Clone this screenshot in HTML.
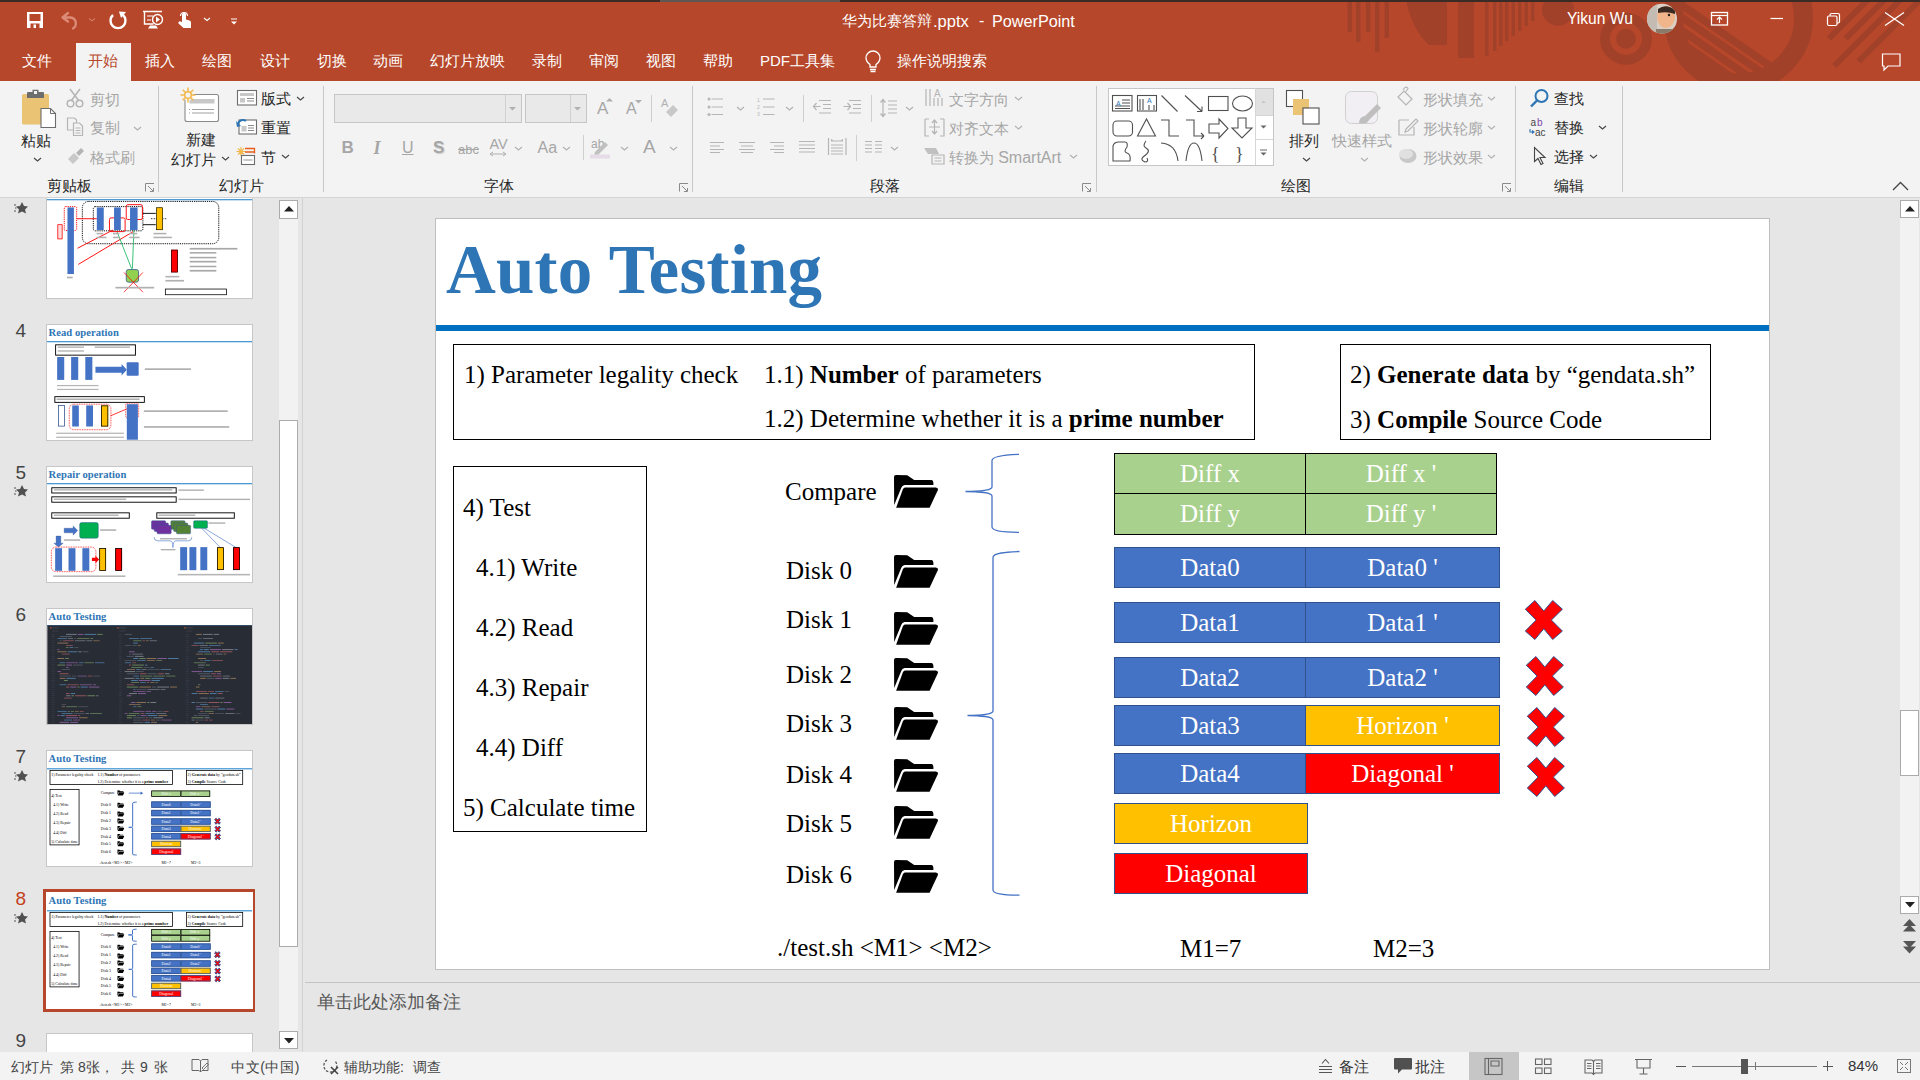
<!DOCTYPE html>
<html><head><meta charset="utf-8"><style>
*{margin:0;padding:0;box-sizing:border-box}
html,body{width:1920px;height:1080px;overflow:hidden;background:#E6E6E6;font-family:"Liberation Sans",sans-serif;position:relative}
.a{position:absolute}
.t{position:absolute;white-space:pre;line-height:1}
svg{position:absolute;overflow:visible}
.st{position:absolute;white-space:pre;line-height:1;font-family:"Liberation Serif",serif;font-size:25px;color:#000}
.cell{position:absolute;color:#fff;font-family:"Liberation Serif",serif;font-size:25px;text-align:center;line-height:1;white-space:pre}
.sl{position:absolute;left:0;top:0;width:1333px;height:750px;background:#fff;overflow:hidden}
.th{position:absolute;width:1333px;height:750px;transform-origin:0 0;transform:scale(0.15379)}
.tab{position:absolute;top:53px;font-size:15px;color:#fff;line-height:1;white-space:pre}
.r{position:absolute;font-size:15px;color:#262626;line-height:1;white-space:pre}
.d{color:#A6A6A6}
</style></head><body>
<div class="a" style="left:0px;top:0px;width:1920px;height:81px;background:#B7472A;"></div>
<svg width="620" height="81" style="left:1300px;top:0"><defs><clipPath id="tb"><rect x="0" y="2" width="620" height="79"/></clipPath></defs><g clip-path="url(#tb)" fill="#A2412A"><rect x="47.5" y="0" width="4.5" height="32"/><rect x="56" y="0" width="4.5" height="42"/><rect x="66" y="0" width="4.5" height="32"/><rect x="75" y="0" width="4.5" height="52"/><rect x="84.5" y="0" width="4.5" height="38"/><path d="M106,0 Q112,30 129,45 L129,0 Z"/><rect x="129" y="0" width="18" height="45"/><rect x="158" y="0" width="16" height="58"/><rect x="185" y="0" width="3.5" height="56"/><rect x="193" y="0" width="3.5" height="51"/><rect x="199" y="0" width="3.5" height="46"/><rect x="205" y="0" width="3.5" height="41"/><rect x="211.5" y="0" width="3.5" height="36"/><rect x="218" y="0" width="3.5" height="31"/><rect x="224.5" y="0" width="3.5" height="26"/><rect x="231" y="0" width="3.5" height="21"/><circle cx="258" cy="9.7" r="16"/><circle cx="326" cy="38.7" r="21" fill="none" stroke="#A2412A" stroke-width="10"/><circle cx="326" cy="38.7" r="10"/><circle cx="438.5" cy="18" r="65" fill="none" stroke="#A2412A" stroke-width="19"/><defs><clipPath id="inr"><circle cx="438.5" cy="18" r="56"/></clipPath></defs><g clip-path="url(#inr)"><line x1="310" y1="-6.599999999999994" x2="450" y2="90.0" stroke="#A2412A" stroke-width="7.5"/><line x1="328" y1="-6.599999999999994" x2="468" y2="90.0" stroke="#A2412A" stroke-width="7.5"/><line x1="347" y1="-6.599999999999994" x2="487" y2="90.0" stroke="#A2412A" stroke-width="7.5"/><line x1="365" y1="-6.599999999999994" x2="505" y2="90.0" stroke="#A2412A" stroke-width="7.5"/></g><line x1="528.8" y1="38.7" x2="577.5" y2="-10" stroke="#A2412A" stroke-width="6"/><line x1="545.6" y1="38.7" x2="594.3000000000001" y2="-10" stroke="#A2412A" stroke-width="6"/><line x1="534.2" y1="66" x2="610.2" y2="-10" stroke="#A2412A" stroke-width="6"/><line x1="558.5" y1="61.5" x2="630.0" y2="-10" stroke="#A2412A" stroke-width="6"/></g></svg>
<div class="a" style="left:0px;top:0px;width:1920px;height:2px;background:#3B2B27;"></div>
<div class="a" style="left:660px;top:0px;width:180px;height:2px;background:#5E5754;"></div>
<svg width="260" height="40" style="left:0;top:0"><rect x="27" y="12" width="16" height="16" fill="#fff"/><rect x="29.5" y="14" width="11" height="7" fill="#B7472A"/><rect x="30.5" y="23.5" width="9" height="4.5" fill="#B7472A"/><rect x="33.5" y="24.5" width="2.5" height="3.5" fill="#fff"/><path d="M62.5,17.5 l5.5,-4.5 M62.5,17.5 l5.5,4 M63,17.5 h8 a6,6 0 0 1 2,11" fill="none" stroke="#DB8B77" stroke-width="2.3" stroke-linecap="round"/><polyline points="89,18.5 92,20.8 95,18.5" fill="none" stroke="#D98C78" stroke-width="1"/><path d="M113,15 a7.5,7.5 0 1 0 10,0" fill="none" stroke="#fff" stroke-width="2.4"/><polygon points="119,11.5 126,12 121,18" fill="#fff"/><path d="M143,11.5 h19" stroke="#fff" stroke-width="1.5"/><path d="M144.5,12 v12 h9" fill="none" stroke="#fff" stroke-width="1.4"/><path d="M147,16 h6 M147,20 h4" stroke="#fff" stroke-width="1.2"/><circle cx="157.5" cy="19.5" r="5" fill="none" stroke="#fff" stroke-width="1.4"/><polygon points="156,16.5 160,19.5 156,22.5" fill="#fff"/><path d="M148,28.5 h10 l-2,-3 h-6 z" fill="#fff"/><path d="M182,22 v-7.5 a2,2 0 0 1 4,0 v5 l3.5,1 a2,2 0 0 1 1.5,2 v5.5 h-7.5 l-5,-4.5 a1.5,1.5 0 0 1 2,-2 z" fill="#fff"/><path d="M180.5,16 a3.5,3.5 0 1 1 7,0" fill="none" stroke="#fff" stroke-width="1.2"/><polyline points="204,18 207,20.5 210,18" fill="none" stroke="#fff" stroke-width="1.1"/><path d="M231,19 h6" stroke="#fff" stroke-width="1"/><polygon points="231,21.5 237,21.5 234,24.5" fill="#fff"/></svg>
<div class="t" style="left:842px;top:13px;font-size:15px;color:#fff;">华为比赛答辩</div>
<div class="t" style="left:933px;top:12.5px;font-size:16.5px;color:#fff;">.pptx</div>
<div class="t" style="left:979px;top:12.5px;font-size:16px;color:#fff;">-</div>
<div class="t" style="left:992px;top:12.5px;font-size:16.2px;color:#fff;">PowerPoint</div>
<div class="t" style="left:1567px;top:11px;font-size:15.6px;color:#fff;">Yikun Wu</div>
<svg width="32" height="32" style="left:1646px;top:3px"><defs><clipPath id="av"><circle cx="16" cy="15.75" r="15"/></clipPath></defs><g clip-path="url(#av)"><rect width="32" height="32" fill="#D9CFC4"/><rect x="0" y="0" width="11" height="32" fill="#C4BCB2"/><ellipse cx="20" cy="14" rx="9" ry="11" fill="#F0B58A"/><path d="M12,6 q8,-6 17,1 l0,4 q-8,-3 -17,-1 z" fill="#3a2a22"/><circle cx="23" cy="12" r="1.2" fill="#222"/><rect x="10" y="26" width="22" height="8" fill="#8a7a6a"/></g></svg>
<svg width="220" height="80" style="left:1700px;top:0"><rect x="11.5" y="12.5" width="16" height="12.5" fill="none" stroke="#fff" stroke-width="1.3"/><path d="M11.5,15.5 h16" stroke="#fff" stroke-width="1.2"/><path d="M19.5,23 v-6 M17,19.5 l2.5,-2.5 l2.5,2.5" fill="none" stroke="#fff" stroke-width="1.2"/><path d="M70.5,18.5 h12.5" stroke="#fff" stroke-width="1.2"/><rect x="127.5" y="16" width="9.5" height="9.5" rx="1.5" fill="none" stroke="#fff" stroke-width="1.2"/><path d="M130,16 v-1 a1.5,1.5 0 0 1 1.5,-1.5 h6.5 a1.5,1.5 0 0 1 1.5,1.5 v6.5 a1.5,1.5 0 0 1 -1.5,1.5 h-1" fill="none" stroke="#fff" stroke-width="1.2"/><path d="M185,12.5 l19,13 M204,12.5 l-19,13" stroke="#fff" stroke-width="1.3"/><path d="M182.5,54 h17.5 v12 h-12 l-4,4 v-4 h-1.5 z" fill="none" stroke="#fff" stroke-width="1.2"/></svg>
<div class="a" style="left:76px;top:43px;width:55px;height:38px;background:#F3F3F3;"></div>
<div class="tab" style="left:22px">文件</div>
<div class="tab" style="left:145px">插入</div>
<div class="tab" style="left:202px">绘图</div>
<div class="tab" style="left:259.5px">设计</div>
<div class="tab" style="left:316.5px">切换</div>
<div class="tab" style="left:373px">动画</div>
<div class="tab" style="left:430px">幻灯片放映</div>
<div class="tab" style="left:532px">录制</div>
<div class="tab" style="left:589px">审阅</div>
<div class="tab" style="left:646px">视图</div>
<div class="tab" style="left:703px">帮助</div>
<div class="tab" style="left:897px">操作说明搜索</div>
<div class="tab" style="left:87.5px;color:#B7472A">开始</div>
<div class="tab" style="left:760px"><span style="font-size:15px">PDF</span>工具集</div>
<svg width="20" height="22" style="left:863px;top:51px"><path d="M7,18.5 h6 M7.5,20.5 h5 M7,16 v-2.5 q-4,-3 -4,-6.5 a7,7 0 0 1 14,0 q0,3.5 -4,6.5 v2.5 z" fill="none" stroke="#fff" stroke-width="1.3"/></svg>
<div class="a" style="left:0px;top:81px;width:1920px;height:116px;background:#F3F3F3;"></div>
<div class="a" style="left:0px;top:197px;width:1920px;height:1px;background:#D4D4D4;"></div>
<div class="a" style="left:158px;top:86px;width:1px;height:106px;background:#C8C8C8;"></div>
<div class="a" style="left:323px;top:86px;width:1px;height:106px;background:#C8C8C8;"></div>
<div class="a" style="left:692px;top:86px;width:1px;height:106px;background:#C8C8C8;"></div>
<div class="a" style="left:1096px;top:86px;width:1px;height:106px;background:#C8C8C8;"></div>
<div class="a" style="left:1515px;top:86px;width:1px;height:106px;background:#C8C8C8;"></div>
<div class="a" style="left:1622px;top:86px;width:1px;height:106px;background:#C8C8C8;"></div>
<div class="a" style="left:650.5px;top:95px;width:1px;height:27px;background:#CFCFCF;"></div>
<div class="a" style="left:582.5px;top:134.5px;width:1px;height:25.5px;background:#CFCFCF;"></div>
<div class="a" style="left:803px;top:95px;width:1px;height:27px;background:#CFCFCF;"></div>
<div class="a" style="left:870.5px;top:95px;width:1px;height:27px;background:#CFCFCF;"></div>
<div class="a" style="left:855.5px;top:134.5px;width:1px;height:26.0px;background:#CFCFCF;"></div>
<div class="t" style="left:46.5px;top:177.5px;font-size:15px;color:#262626;">剪贴板</div>
<div class="t" style="left:218.5px;top:177.5px;font-size:15px;color:#262626;">幻灯片</div>
<div class="t" style="left:483.5px;top:177.5px;font-size:15px;color:#262626;">字体</div>
<div class="t" style="left:869.5px;top:177.5px;font-size:15px;color:#262626;">段落</div>
<div class="t" style="left:1280.5px;top:177.5px;font-size:15px;color:#262626;">绘图</div>
<div class="t" style="left:1554px;top:177.5px;font-size:15px;color:#262626;">编辑</div>
<svg width="10" height="9" style="left:144.5px;top:183px"><path d="M0.5,8.5 v-8 h8.5 M3,3 l5,5 M8.5,5 v3.5 h-3.5" fill="none" stroke="#8A8A8A" stroke-width="1"/></svg>
<svg width="10" height="9" style="left:678.5px;top:183px"><path d="M0.5,8.5 v-8 h8.5 M3,3 l5,5 M8.5,5 v3.5 h-3.5" fill="none" stroke="#8A8A8A" stroke-width="1"/></svg>
<svg width="10" height="9" style="left:1081.5px;top:183px"><path d="M0.5,8.5 v-8 h8.5 M3,3 l5,5 M8.5,5 v3.5 h-3.5" fill="none" stroke="#8A8A8A" stroke-width="1"/></svg>
<svg width="10" height="9" style="left:1501.5px;top:183px"><path d="M0.5,8.5 v-8 h8.5 M3,3 l5,5 M8.5,5 v3.5 h-3.5" fill="none" stroke="#8A8A8A" stroke-width="1"/></svg>
<svg width="40" height="42" style="left:20px;top:87px"><rect x="2" y="7" width="27" height="30.5" rx="1.5" fill="#EBC375"/><path d="M7,11 v-5 a1,1 0 0 1 1,-1 h4.5 v-2.3 h6 v2.3 h4.5 a1,1 0 0 1 1,1 v5 z" fill="#6D6D6D"/><rect x="14" y="4" width="3" height="3" fill="#F3F3F3"/><path d="M21,21.5 h9.5 l5,5 v14 h-14.5 z" fill="#fff" stroke="#6D6D6D" stroke-width="1.1"/><path d="M30.5,21.5 v5 h5" fill="none" stroke="#6D6D6D" stroke-width="1"/></svg>
<div class="t" style="left:20.5px;top:132.5px;font-size:15px;color:#262626;">粘贴</div>
<svg width="9" height="6" style="left:33.0px;top:156.5px"><polyline points="1,1 4.5,4 8,1" fill="none" stroke="#444" stroke-width="1.1"/></svg>
<svg width="20" height="20" style="left:66px;top:88px"><path d="M4,1 l9,12 M14,1 l-9,12" stroke="#B5B5B5" stroke-width="1.5"/><circle cx="4.5" cy="15.5" r="3.3" fill="none" stroke="#B5B5B5" stroke-width="1.5"/><circle cx="13.5" cy="15.5" r="3.3" fill="none" stroke="#B5B5B5" stroke-width="1.5"/></svg>
<div class="t" style="left:90px;top:91.5px;font-size:15px;color:#A6A6A6;">剪切</div>
<svg width="20" height="20" style="left:66px;top:117px"><path d="M1.5,1 h7 l2,2 v10 h-9 z" fill="none" stroke="#B5B5B5" stroke-width="1.2"/><path d="M7.5,6 h6 l3,3 v9.5 h-9 z" fill="#F3F3F3" stroke="#B5B5B5" stroke-width="1.2"/><path d="M9.5,11 h5 M9.5,13.5 h5 M9.5,16 h5" stroke="#B5B5B5" stroke-width="1"/></svg>
<div class="t" style="left:90px;top:120px;font-size:15px;color:#A6A6A6;">复制</div>
<svg width="9" height="6" style="left:133.0px;top:125.5px"><polyline points="1,1 4.5,4 8,1" fill="none" stroke="#B0B0B0" stroke-width="1.1"/></svg>
<svg width="20" height="18" style="left:66px;top:147px"><path d="M2,12 l6,-6 l5,5 l-6,6 z" fill="#C8C8C8"/><path d="M10,6 l5,-5 l3,3 l-5,5 z" fill="#B5B5B5"/></svg>
<div class="t" style="left:90px;top:149.5px;font-size:15px;color:#A6A6A6;">格式刷</div>
<svg width="44" height="40" style="left:179px;top:86px"><rect x="6" y="8.5" width="33.5" height="27" rx="2" fill="#fff" stroke="#8A8A8A" stroke-width="1.1"/><rect x="10.5" y="13" width="25" height="4.5" fill="#C8C8C8"/><path d="M13,23.5 h22 M13,27 h22 M10,23.5 h1 M10,27 h1" stroke="#A0A0A0" stroke-width="1"/><circle cx="9" cy="9" r="5.5" fill="#F3F3F3"/><g stroke="#F2B84B" stroke-width="1.5"><path d="M9,1.5 v15 M1.5,9 h15 M3.7,3.7 l10.6,10.6 M14.3,3.7 l-10.6,10.6"/></g><circle cx="9" cy="9" r="3.3" fill="#F3F3F3" stroke="#F2B84B" stroke-width="1.5"/></svg>
<div class="t" style="left:185.5px;top:131.5px;font-size:15px;color:#262626;">新建</div>
<div class="t" style="left:171px;top:151.5px;font-size:15px;color:#262626;">幻灯片</div>
<svg width="9" height="6" style="left:221.0px;top:155.5px"><polyline points="1,1 4.5,4 8,1" fill="none" stroke="#444" stroke-width="1.1"/></svg>
<svg width="22" height="18" style="left:236px;top:89px"><rect x="1.5" y="1.5" width="19" height="14.5" fill="#fff" stroke="#6D6D6D" stroke-width="1.1"/><rect x="4" y="4" width="14" height="3" fill="#C8C8C8"/><rect x="4" y="9" width="5" height="4.5" fill="#C8C8C8"/><path d="M11,9.5 h7 M11,12 h7" stroke="#8A8A8A" stroke-width="1"/></svg>
<div class="t" style="left:261px;top:91px;font-size:15px;color:#262626;">版式</div>
<svg width="9" height="6" style="left:296.0px;top:96px"><polyline points="1,1 4.5,4 8,1" fill="none" stroke="#444" stroke-width="1.1"/></svg>
<svg width="22" height="18" style="left:236px;top:117px"><rect x="3" y="3" width="17.5" height="14" fill="#fff" stroke="#6D6D6D" stroke-width="1.1"/><rect x="5.5" y="9" width="5" height="5.5" fill="#C8C8C8"/><path d="M12,8.5 h6 M12,11 h6 M12,13.5 h6" stroke="#8A8A8A" stroke-width="1"/><path d="M2,7 a5,5 0 0 1 8,-3" fill="none" stroke="#2E75B6" stroke-width="2"/><polygon points="0,4 5,9 1,10" fill="#2E75B6"/></svg>
<div class="t" style="left:261px;top:119.5px;font-size:15px;color:#262626;">重置</div>
<svg width="22" height="20" style="left:236px;top:146px"><g stroke="#F2B84B" stroke-width="1.2"><path d="M5,1 v9 M0.5,5.5 h9 M2,2.5 l6,6 M8,2.5 l-6,6"/></g><rect x="5.5" y="9.5" width="13" height="9" fill="#fff" stroke="#6D6D6D" stroke-width="1.1"/><path d="M9,2.5 h9.5 v5 M9,6 h9.5" fill="none" stroke="#E65E1A" stroke-width="1.3"/><rect x="7.5" y="13" width="9" height="2" fill="#C8C8C8"/></svg>
<div class="t" style="left:261px;top:149.5px;font-size:15px;color:#262626;">节</div>
<svg width="9" height="6" style="left:280.5px;top:154px"><polyline points="1,1 4.5,4 8,1" fill="none" stroke="#444" stroke-width="1.1"/></svg>
<div class="a" style="left:334px;top:94px;width:188px;height:28.5px;background:#E9E9E9;border:1px solid #C6C6C6"></div>
<div class="a" style="left:505px;top:95px;width:1px;height:26.5px;background:#D0D0D0;"></div>
<svg width="8" height="5" style="left:509px;top:107px"><polygon points="0,0 7,0 3.5,3.5" fill="#B0B0B0"/></svg>
<div class="a" style="left:524.5px;top:94px;width:62px;height:28.5px;background:#E9E9E9;border:1px solid #C6C6C6"></div>
<div class="a" style="left:569.5px;top:95px;width:1px;height:26.5px;background:#D0D0D0;"></div>
<svg width="8" height="5" style="left:574px;top:107px"><polygon points="0,0 7,0 3.5,3.5" fill="#B0B0B0"/></svg>
<div class="t" style="left:597px;top:100px;font-size:17px;color:#A6A6A6;">A</div>
<svg width="8" height="4" style="left:606px;top:98px"><polygon points="0,3.5 7,3.5 3.5,0" fill="#B0B0B0"/></svg>
<div class="t" style="left:626px;top:101px;font-size:16px;color:#A6A6A6;">A</div>
<svg width="8" height="4" style="left:635px;top:100px"><polygon points="0,0 7,0 3.5,3.5" fill="#B0B0B0"/></svg>
<svg width="22" height="22" style="left:660px;top:97px"><text x="1" y="10" font-size="11" fill="#B0B0B0" font-family="Liberation Sans">A</text><path d="M6,15 l7,-7 l5,5 l-7,7 z" fill="#C8C8C8"/></svg>
<div class="t" style="left:341.5px;top:139px;font-size:17px;color:#A6A6A6;"><b>B</b></div>
<div class="t" style="left:373.5px;top:139px;font-size:18px;color:#A6A6A6;"><i><b style="font-family:Liberation Serif">I</b></i></div>
<div class="t" style="left:402px;top:139.5px;font-size:16px;color:#A6A6A6;"><u>U</u></div>
<div class="t" style="left:433px;top:138.5px;font-size:17px;color:#A6A6A6;text-shadow:1px 1px 1px #ccc"><b>S</b></div>
<div class="t" style="left:458px;top:142.5px;font-size:13px;color:#A6A6A6;"><s>abc</s></div>
<div class="t" style="left:489.5px;top:137px;font-size:14.5px;color:#A6A6A6;">AV</div>
<svg width="20" height="6" style="left:489px;top:151px"><path d="M1,3 h16 M1,3 l3,-2 M1,3 l3,2 M17,3 l-3,-2 M17,3 l-3,2" fill="none" stroke="#B0B0B0" stroke-width="1"/></svg>
<svg width="9" height="6" style="left:513.5px;top:145.5px"><polyline points="1,1 4.5,4 8,1" fill="none" stroke="#B0B0B0" stroke-width="1.1"/></svg>
<div class="t" style="left:537.5px;top:140px;font-size:16px;color:#A6A6A6;">Aa</div>
<svg width="9" height="6" style="left:562.0px;top:145.5px"><polyline points="1,1 4.5,4 8,1" fill="none" stroke="#B0B0B0" stroke-width="1.1"/></svg>
<div class="t" style="left:591px;top:137.5px;font-size:12px;color:#A6A6A6;">ab</div>
<svg width="22" height="22" style="left:590px;top:137px"><path d="M5,15 l10,-10 l3,3 l-10,10 l-4,1 z" fill="#C0C0C0"/><rect x="0" y="17.5" width="20" height="4" fill="#E5DCE8"/></svg>
<svg width="9" height="6" style="left:619.5px;top:145.5px"><polyline points="1,1 4.5,4 8,1" fill="none" stroke="#B0B0B0" stroke-width="1.1"/></svg>
<div class="t" style="left:643px;top:136.5px;font-size:19px;color:#A6A6A6;">A</div>
<svg width="9" height="6" style="left:669.0px;top:145.5px"><polyline points="1,1 4.5,4 8,1" fill="none" stroke="#B0B0B0" stroke-width="1.1"/></svg>
<svg width="400" height="80" style="left:700px;top:90px"><g stroke="#B5B5B5" stroke-width="1.2" fill="none"><path d="M11.5,9 h11.5 M11.5,17 h11.5 M11.5,24.5 h11.5"/><path d="M63,9 h11.5 M63,17 h11.5 M63,24.5 h11.5"/><path d="M119,10.5 h12 M123,14.5 h8 M123,18.5 h8 M119,23 h12 M113.5,16.5 h7 M116.5,13 l-3,3.5 l3,3.5"/><path d="M149,10.5 h12 M153,14.5 h8 M153,18.5 h8 M149,23 h12 M143.5,16.5 h7 M147.5,13 l3,3.5 l-3,3.5"/><path d="M188,11 h9 M188,15 h9 M188,19 h9 M188,23 h9 M183,10 v16 M180.5,12.5 l2.5,-3 l2.5,3 M180.5,23.5 l2.5,3 l2.5,-3"/><path d="M10,52.5 h14 M10,56 h10 M10,59.5 h14 M10,62.5 h10"/><path d="M39,52.5 h16 M41,56 h12 M39,59.5 h16 M41,62.5 h12"/><path d="M70,52.5 h14 M74,56 h10 M70,59.5 h14 M74,62.5 h10"/><path d="M99,51.5 h16 M99,55 h16 M99,58.5 h16 M99,62 h16"/><path d="M128.5,48 v17 M146,48 v17 M131,55 h12 M131,58 h12 M131,61 h12 M131,64 h12 M131,51 h12 M133,51 l-2,-1.5 M141,51 l2,-1.5"/><path d="M165,51.5 h7 M175,51.5 h7 M165,55 h7 M175,55 h7 M165,58.5 h7 M175,58.5 h7 M165,62 h7 M175,62 h7"/></g><g fill="#B5B5B5"><circle cx="9" cy="9" r="1.5"/><circle cx="9" cy="17" r="1.5"/><circle cx="9" cy="24.5" r="1.5"/></g><text x="57" y="12" font-size="5" fill="#B5B5B5">1</text><text x="57" y="19" font-size="5" fill="#B5B5B5">2</text><text x="57" y="26" font-size="5" fill="#B5B5B5">3</text></svg>
<svg width="9" height="6" style="left:735.5px;top:106px"><polyline points="1,1 4.5,4 8,1" fill="none" stroke="#B0B0B0" stroke-width="1.1"/></svg>
<svg width="9" height="6" style="left:784.5px;top:106px"><polyline points="1,1 4.5,4 8,1" fill="none" stroke="#B0B0B0" stroke-width="1.1"/></svg>
<svg width="9" height="6" style="left:904.5px;top:106px"><polyline points="1,1 4.5,4 8,1" fill="none" stroke="#B0B0B0" stroke-width="1.1"/></svg>
<svg width="9" height="6" style="left:889.5px;top:145.5px"><polyline points="1,1 4.5,4 8,1" fill="none" stroke="#B0B0B0" stroke-width="1.1"/></svg>
<svg width="24" height="80" style="left:923px;top:86px"><g stroke="#B5B5B5" stroke-width="1.2" fill="none"><path d="M3,3 v17 M7,3 v17 M11,12 v8 M15,12 v8 M19,12 v8"/><path d="M2,33 v17 h4 M2,33 h4 M21,33 v17 h-4 M21,33 h-4 M11.5,34 v14 M9,37 l2.5,-3 l2.5,3 M9,45 l2.5,3 l2.5,-3 M6,41 h11"/><path d="M9,69 h12 v9 h-12 z M11.5,72 h7 M11.5,75 h7"/></g><text x="11" y="11" font-size="10" fill="#B5B5B5" font-family="Liberation Sans">A</text><polygon points="1,62 13,62 16,68 5,68" fill="#C0C0C0"/></svg>
<div class="t" style="left:949px;top:91.5px;font-size:15px;color:#A6A6A6;">文字方向</div>
<svg width="9" height="6" style="left:1013.5px;top:96px"><polyline points="1,1 4.5,4 8,1" fill="none" stroke="#B0B0B0" stroke-width="1.1"/></svg>
<div class="t" style="left:949px;top:120.5px;font-size:15px;color:#A6A6A6;">对齐文本</div>
<svg width="9" height="6" style="left:1013.5px;top:125px"><polyline points="1,1 4.5,4 8,1" fill="none" stroke="#B0B0B0" stroke-width="1.1"/></svg>
<div class="t" style="left:949px;top:149.5px;font-size:15px;color:#A6A6A6;">转换为 <span style="font-size:16px">SmartArt</span></div>
<svg width="9" height="6" style="left:1068.5px;top:154px"><polyline points="1,1 4.5,4 8,1" fill="none" stroke="#B0B0B0" stroke-width="1.1"/></svg>
<div class="a" style="left:1108px;top:88px;width:166px;height:77.5px;background:#fff;border:1px solid #C6C6C6"></div>
<div class="a" style="left:1255px;top:89px;width:18px;height:26px;background:#E1E1E1;"></div>
<div class="a" style="left:1255px;top:88px;width:1px;height:77px;background:#D6D6D6;"></div>
<div class="a" style="left:1255px;top:115px;width:18px;height:1px;background:#D6D6D6;"></div>
<div class="a" style="left:1255px;top:138.5px;width:18px;height:1px;background:#D6D6D6;"></div>
<svg width="10" height="30" style="left:1259px;top:98px"><polygon points="2,5 7,5 4.5,2.5" fill="#C8C8C8"/><polygon points="1.5,27.5 7.5,27.5 4.5,30.5" fill="#666"/></svg>
<svg width="10" height="8" style="left:1259px;top:149px"><path d="M1,1 h7" stroke="#666" stroke-width="1"/><polygon points="1.5,3.5 7.5,3.5 4.5,6.5" fill="#666"/></svg>
<svg width="150" height="80" style="left:1108px;top:88px"><g stroke="#505050" stroke-width="1.1" fill="none"><rect x="4.5" y="7.5" width="19.5" height="15.5"/><path d="M14,12 h8 M14,15 h8 M7,18 h15 M7,20.5 h15"/><rect x="29.5" y="7.5" width="19" height="15.5"/><path d="M32,11 v11 M35,11 v11 M46,17 v5 M41,17 v5"/><path d="M53.5,7.5 l16,16"/><path d="M77,7.5 l17,16 M94,23.5 v-5 M94,23.5 h-5"/><rect x="100.5" y="8.5" width="19.5" height="14"/><ellipse cx="134.5" cy="15.5" rx="10" ry="7.5"/><rect x="5" y="33" width="19.5" height="15" rx="4"/><path d="M29.5,48 l9,-17 l9,17 z"/><path d="M53,32 h8 v16 h10"/><path d="M78,32 h8 v16 h10 M96,48 l-3,-3 M96,48 l-3,3"/><path d="M101,36 h10 v-5 l9,9.5 l-9,9.5 v-5 h-10 z"/><path d="M130,30 h8 v10 h6 l-10,10 l-10,-10 h6 z"/><path d="M5,73 v-15 q1,-4 6,-4 h6 q3,0 2,5 q-4,5 0,6 q4,1 3,8 z"/><path d="M38,53 q-4,5 0,7 q6,3 -3,9 q-3,3 2,5 q4,0 2,-4"/><path d="M53,55 q15,1 17,18"/><path d="M78,73 q2,-18 8,-18 q6,0 8,18"/><text x="103" y="72" font-size="18" fill="#505050" stroke="none" font-family="Liberation Serif">{</text><text x="127" y="72" font-size="18" fill="#505050" stroke="none" font-family="Liberation Serif">}</text></g><text x="8" y="18" font-size="7" fill="#2E75B6" font-family="Liberation Sans">A</text><text x="39" y="15" font-size="7" fill="#2E75B6" font-family="Liberation Sans">A</text></svg>
<svg width="40" height="40" style="left:1284px;top:89px"><rect x="2.5" y="1.5" width="16" height="16" fill="#fff" stroke="#505050" stroke-width="1.1"/><rect x="9" y="10" width="16" height="16" fill="#EBC375"/><rect x="19" y="19" width="16" height="16" fill="#fff" stroke="#505050" stroke-width="1.1"/></svg>
<div class="t" style="left:1288.5px;top:132.5px;font-size:15px;color:#262626;">排列</div>
<svg width="9" height="6" style="left:1301.5px;top:156.5px"><polyline points="1,1 4.5,4 8,1" fill="none" stroke="#444" stroke-width="1.1"/></svg>
<svg width="44" height="40" style="left:1342px;top:89px"><rect x="3.5" y="2.5" width="32" height="32" rx="6" fill="#F2EFF4" stroke="#D0D0D0" stroke-width="1"/><path d="M17,34 q0,-6 6,-7 l12,-12 l4,4 l-12,12 q-2,5 -10,3 z" fill="#BFBFBF"/></svg>
<div class="t" style="left:1332px;top:132.5px;font-size:15px;color:#A6A6A6;">快速样式</div>
<svg width="9" height="6" style="left:1359.5px;top:156.5px"><polyline points="1,1 4.5,4 8,1" fill="none" stroke="#B0B0B0" stroke-width="1.1"/></svg>
<svg width="24" height="80" style="left:1397px;top:86px"><g stroke="#B5B5B5" stroke-width="1.2" fill="none"><path d="M7,5 l8,8 l-6,6 l-8,-8 z M6,4 l2,-2.5 a2,2 0 0 1 3,1 l-2,3"/><path d="M2,34 h10 M2,34 v15 h15 v-8 M9,43 l10,-10 l2,2 l-10,10 l-3,1 z"/></g><ellipse cx="11" cy="70" rx="8.5" ry="7" fill="#C8C8C8"/><ellipse cx="9" cy="68" rx="7" ry="5" fill="#E0E0E0"/></svg>
<div class="t" style="left:1423px;top:91.5px;font-size:15px;color:#A6A6A6;">形状填充</div>
<svg width="9" height="6" style="left:1487.0px;top:96px"><polyline points="1,1 4.5,4 8,1" fill="none" stroke="#B0B0B0" stroke-width="1.1"/></svg>
<div class="t" style="left:1423px;top:120.5px;font-size:15px;color:#A6A6A6;">形状轮廓</div>
<svg width="9" height="6" style="left:1487.0px;top:125px"><polyline points="1,1 4.5,4 8,1" fill="none" stroke="#B0B0B0" stroke-width="1.1"/></svg>
<div class="t" style="left:1423px;top:149.5px;font-size:15px;color:#A6A6A6;">形状效果</div>
<svg width="9" height="6" style="left:1487.0px;top:154px"><polyline points="1,1 4.5,4 8,1" fill="none" stroke="#B0B0B0" stroke-width="1.1"/></svg>
<svg width="22" height="20" style="left:1529px;top:88px"><circle cx="12.5" cy="8" r="6" fill="none" stroke="#2E75B6" stroke-width="2"/><path d="M8,12.5 l-6,6" stroke="#2E75B6" stroke-width="2.4"/></svg>
<div class="t" style="left:1553.5px;top:91px;font-size:15px;color:#262626;">查找</div>
<svg width="22" height="20" style="left:1529px;top:118px"><text x="1.5" y="8" font-size="10" fill="#444" font-family="Liberation Sans">a</text><text x="8" y="8" font-size="10" fill="#7B46A5" font-family="Liberation Sans">b</text><text x="6" y="18" font-size="10" fill="#444" font-family="Liberation Sans">ac</text><path d="M1,11 v3 h4 M3,12.5 l2,1.5 l-2,1.5" fill="none" stroke="#2E75B6" stroke-width="1.1"/></svg>
<div class="t" style="left:1553.5px;top:120px;font-size:15px;color:#262626;">替换</div>
<svg width="9" height="6" style="left:1597.5px;top:125px"><polyline points="1,1 4.5,4 8,1" fill="none" stroke="#444" stroke-width="1.1"/></svg>
<svg width="14" height="20" style="left:1533px;top:146px"><path d="M1.5,1.5 v14 l3.5,-3 l3,6 l2,-1 l-3,-6 h5 z" fill="none" stroke="#444" stroke-width="1.1"/></svg>
<div class="t" style="left:1553.5px;top:149px;font-size:15px;color:#262626;">选择</div>
<svg width="9" height="6" style="left:1588.5px;top:154px"><polyline points="1,1 4.5,4 8,1" fill="none" stroke="#444" stroke-width="1.1"/></svg>
<svg width="18" height="10" style="left:1892px;top:181px"><polyline points="1,9 8.5,1.5 16,9" fill="none" stroke="#444" stroke-width="1.3"/></svg>
<div class="a" style="left:0px;top:198px;width:302px;height:854px;background:#E6E6E6;"></div>
<div class="a" style="left:0;top:198px;width:278px;height:854px;overflow:hidden"><div class="a" style="left:0;top:-198px;width:278px;height:1080px"><div class="a" style="left:46px;top:181.7px;width:207px;height:117.3px;background:#C6C6C6"></div><div class="a" style="left:47px;top:182.7px;width:205px;height:115.3px;overflow:hidden;background:#fff"><div class="th"><div class="st" style="left:10px;top:17px;font-size:69px;font-weight:bold;color:#2E75B6;letter-spacing:0.2px">Write operation</div><div class="a" style="left:0.0px;top:106.0px;width:1333.0px;height:6.0px;background:#0070C0;"></div>
<svg width="1333" height="750" style="left:0;top:0"><rect x="229.8" y="119.9" width="887.1" height="275.0" rx="40" fill="none" stroke="#000" stroke-width="6" stroke-dasharray="8,6"/><rect x="301.2" y="153.5" width="322.3" height="157.5" rx="12" fill="none" stroke="#000" stroke-width="6" stroke-dasharray="8,6"/><rect x="112.2" y="153.5" width="80.8" height="155.4" rx="8" fill="none" stroke="#f00" stroke-width="6" stroke-dasharray="8,6"/><line x1="193.0" y1="232.2" x2="324.3" y2="232.2" stroke="#f00" stroke-width="6"/><line x1="623.4" y1="197.6" x2="707.4" y2="197.6" stroke="#000" stroke-width="6"/><line x1="623.4" y1="271.0" x2="707.4" y2="271.0" stroke="#000" stroke-width="6"/><line x1="675.9" y1="232.2" x2="775.7" y2="232.2" stroke="#000" stroke-width="5" stroke-dasharray="10,8"/><line x1="198.3" y1="424.3" x2="429.2" y2="305.7" stroke="#f00" stroke-width="6"/><line x1="203.5" y1="529.3" x2="560.5" y2="316.2" stroke="#f00" stroke-width="6"/><line x1="455.5" y1="316.2" x2="550.0" y2="557.6" stroke="#00B050" stroke-width="5"/><line x1="567.8" y1="237.4" x2="555.2" y2="557.6" stroke="#00B050" stroke-width="5"/><rect x="70.2" y="271.0" width="28.3" height="92.4" rx="0" fill="#fdd" stroke="#f00" stroke-width="5"/><rect x="515.3" y="562.9" width="79.8" height="81.9" rx="14" fill="#92D050" stroke="#2F528F" stroke-width="5"/><line x1="500.6" y1="581.8" x2="623.4" y2="709.9" stroke="#f00" stroke-width="5"/><line x1="623.4" y1="581.8" x2="500.6" y2="709.9" stroke="#f00" stroke-width="5"/><rect x="406.1" y="226.9" width="101.8" height="89.2" rx="10" fill="none" stroke="#f00" stroke-width="6"/><rect x="515.3" y="140.9" width="105.0" height="96.6" rx="10" fill="none" stroke="#f00" stroke-width="6"/></svg>
<div class="a" style="left:133.2px;top:158.7px;width:42.0px;height:433.6px;background:#4472C4;"></div>
<div class="a" style="left:324.3px;top:158.7px;width:45.1px;height:147.0px;background:#4472C4;"></div>
<div class="a" style="left:435.5px;top:158.7px;width:44.1px;height:147.0px;background:#4472C4;"></div>
<div class="a" style="left:539.5px;top:158.7px;width:49.3px;height:147.0px;background:#4472C4;"></div>
<div class="a" style="left:710.6px;top:158.7px;width:42.0px;height:147.0px;background:#FFC000;border:4px solid #000;"></div>
<div class="a" style="left:807.2px;top:433.8px;width:44.1px;height:147.0px;background:#FF0000;border:4px solid #000;"></div>
<div class="a" style="left:767.3px;top:686.8px;width:402.1px;height:42.0px;background:#fff;border:5px solid #000;"></div>
<div class="a" style="left:927.9px;top:422.2px;width:309.7px;height:10.5px;background:#a8a8a8;"></div>
<div class="a" style="left:927.9px;top:448.5px;width:173.2px;height:10.5px;background:#a8a8a8;"></div>
<div class="a" style="left:927.9px;top:479.9px;width:173.2px;height:10.5px;background:#a8a8a8;"></div>
<div class="a" style="left:927.9px;top:506.2px;width:173.2px;height:10.5px;background:#a8a8a8;"></div>
<div class="a" style="left:927.9px;top:537.7px;width:173.2px;height:10.5px;background:#a8a8a8;"></div>
<div class="a" style="left:927.9px;top:565.0px;width:173.2px;height:10.5px;background:#a8a8a8;"></div>
<div class="a" style="left:322.2px;top:323.5px;width:44.1px;height:10.5px;background:#b0b0b0;"></div>
<div class="a" style="left:322.2px;top:348.7px;width:65.1px;height:10.5px;background:#b0b0b0;"></div>
<div class="a" style="left:429.2px;top:323.5px;width:42.0px;height:10.5px;background:#b0b0b0;"></div>
<div class="a" style="left:429.2px;top:348.7px;width:42.0px;height:10.5px;background:#b0b0b0;"></div>
<div class="a" style="left:534.2px;top:323.5px;width:52.5px;height:10.5px;background:#b0b0b0;"></div>
<div class="a" style="left:534.2px;top:348.7px;width:68.2px;height:10.5px;background:#b0b0b0;"></div>
<div class="a" style="left:691.7px;top:323.5px;width:84.0px;height:10.5px;background:#b0b0b0;"></div>
<div class="a" style="left:691.7px;top:348.7px;width:120.7px;height:10.5px;background:#b0b0b0;"></div>
<div class="a" style="left:130.0px;top:609.1px;width:36.7px;height:10.5px;background:#b0b0b0;"></div>
<div class="a" style="left:770.4px;top:603.8px;width:89.2px;height:10.5px;background:#b0b0b0;"></div>
<div class="a" style="left:770.4px;top:630.1px;width:120.7px;height:10.5px;background:#b0b0b0;"></div>
<div class="a" style="left:445.0px;top:675.2px;width:251.9px;height:10.5px;background:#b0b0b0;"></div></div></div>
<div class="a" style="left:46px;top:324px;width:207px;height:117.3px;background:#C6C6C6"></div><div class="a" style="left:47px;top:325px;width:205px;height:115.3px;overflow:hidden;background:#fff"><div class="th"><div class="st" style="left:10px;top:17px;font-size:69px;font-weight:bold;color:#2E75B6;letter-spacing:0.2px">Read operation</div><div class="a" style="left:0.0px;top:106.0px;width:1333.0px;height:6.0px;background:#0070C0;"></div>
<div class="a" style="left:53.0px;top:125.5px;width:525.0px;height:73.5px;background:#fff;border:6px solid #000;"></div>
<div class="a" style="left:70.0px;top:140.0px;width:170.0px;height:8.0px;background:#a8a8a8;"></div><div class="a" style="left:70.0px;top:165.0px;width:170.0px;height:8.0px;background:#a8a8a8;"></div>
<div class="a" style="left:310.0px;top:140.0px;width:230.0px;height:8.0px;background:#a8a8a8;"></div>
<div class="a" style="left:66.0px;top:208.0px;width:46.0px;height:149.0px;background:#4472C4;"></div>
<div class="a" style="left:157.0px;top:208.0px;width:46.0px;height:149.0px;background:#4472C4;"></div>
<div class="a" style="left:248.6px;top:208.0px;width:46.0px;height:149.0px;background:#4472C4;"></div>
<svg width="1333" height="750" style="left:0;top:0"><polygon points="315,272 485,272 485,253 519,291 485,329 485,310 315,310" fill="#4472C4"/><line x1="415" y1="590" x2="520" y2="545" stroke="#f00" stroke-width="5"/><rect x="144.7" y="515" width="271" height="166" rx="30" fill="none" stroke="#f00" stroke-width="5" stroke-dasharray="6,5"/><rect x="512" y="508" width="84" height="95" rx="10" fill="none" stroke="#f00" stroke-width="5" stroke-dasharray="6,5"/></svg>
<div class="a" style="left:518.0px;top:242.0px;width:78.0px;height:88.0px;background:#4472C4;border-radius:6px"></div>
<div class="a" style="left:636.0px;top:282.0px;width:300.0px;height:10.0px;background:#a8a8a8;"></div>
<div class="a" style="left:65.0px;top:390.0px;width:270.0px;height:8.0px;background:#b5b5b5;"></div><div class="a" style="left:65.0px;top:415.0px;width:270.0px;height:8.0px;background:#b5b5b5;"></div>
<div class="a" style="left:47.7px;top:462.7px;width:588.0px;height:43.0px;background:#fff;border:6px solid #000;"></div>
<div class="a" style="left:62.0px;top:478.0px;width:540.0px;height:9.0px;background:#a8a8a8;"></div>
<div class="a" style="left:71.7px;top:520.6px;width:45.0px;height:139.0px;background:#fff;border:5px solid #2F528F;"></div>
<div class="a" style="left:164.0px;top:523.0px;width:43.0px;height:137.0px;background:#4472C4;"></div>
<div class="a" style="left:254.6px;top:523.0px;width:44.0px;height:137.0px;background:#4472C4;"></div>
<div class="a" style="left:352.0px;top:523.0px;width:45.6px;height:137.0px;background:#FFC000;border:5px solid #000;"></div>
<div class="a" style="left:519.0px;top:515.0px;width:72.0px;height:231.0px;background:#4472C4;"></div>
<div class="a" style="left:630.0px;top:555.0px;width:545.0px;height:10.0px;background:#a8a8a8;"></div>
<div class="a" style="left:630.0px;top:658.0px;width:555.0px;height:10.0px;background:#a8a8a8;"></div>
<div class="a" style="left:60.0px;top:700.0px;width:440.0px;height:8.0px;background:#b5b5b5;"></div><div class="a" style="left:60.0px;top:726.0px;width:440.0px;height:8.0px;background:#b5b5b5;"></div></div></div>
<div class="a" style="left:46px;top:466px;width:207px;height:117.3px;background:#C6C6C6"></div><div class="a" style="left:47px;top:467px;width:205px;height:115.3px;overflow:hidden;background:#fff"><div class="th"><div class="st" style="left:10px;top:17px;font-size:69px;font-weight:bold;color:#2E75B6;letter-spacing:0.2px">Repair operation</div><div class="a" style="left:0.0px;top:106.0px;width:1333.0px;height:6.0px;background:#0070C0;"></div>
<div class="a" style="left:28.0px;top:131.5px;width:815.0px;height:40.5px;background:#fff;border:6px solid #000;"></div>
<div class="a" style="left:45.0px;top:144.0px;width:770.0px;height:9.0px;background:#b0b0b0;"></div>
<div class="a" style="left:855.0px;top:146.0px;width:165.0px;height:9.0px;background:#b0b0b0;"></div>
<div class="a" style="left:28.0px;top:191.0px;width:815.0px;height:41.0px;background:#fff;border:6px solid #000;"></div>
<div class="a" style="left:45.0px;top:205.0px;width:470.0px;height:9.0px;background:#b0b0b0;"></div>
<div class="a" style="left:855.0px;top:206.0px;width:465.0px;height:9.0px;background:#b0b0b0;"></div>
<div class="a" style="left:28.0px;top:295.0px;width:510.0px;height:41.0px;background:#fff;border:6px solid #000;"></div>
<div class="a" style="left:45.0px;top:309.0px;width:420.0px;height:9.0px;background:#b0b0b0;"></div>
<div class="a" style="left:711.4px;top:295.0px;width:510.0px;height:41.0px;background:#fff;border:6px solid #000;"></div>
<div class="a" style="left:725.0px;top:309.0px;width:240.0px;height:9.0px;background:#b0b0b0;"></div>
<svg width="1333" height="750" style="left:0;top:0"><polygon points="111.6,398 170,398 170,383 199.7,413 170,443 170,428 111.6,428" fill="#4472C4" stroke="#2F528F" stroke-width="2"/><polygon points="59,449 90,449 90,495 105.6,495 74.8,520.6 44,495 59,495" fill="#4472C4" stroke="#2F528F" stroke-width="2"/><rect x="28" y="520.6" width="290" height="160" rx="30" fill="none" stroke="#f00" stroke-width="5" stroke-dasharray="6,5"/><polygon points="292,590 315,590 315,577 339,601 315,626 315,612 292,612" fill="#f00"/><path d="M696,456 Q696,480 720,480 L800,480 Q819,480 819,524 Q819,480 838,480 L918,480 Q942,480 942,456" fill="none" stroke="#4472C4" stroke-width="4"/><line x1="1000" y1="392" x2="1128" y2="525" stroke="#4472C4" stroke-width="4"/><line x1="1012" y1="392" x2="1232" y2="525" stroke="#4472C4" stroke-width="4"/></svg>
<div class="a" style="left:211.0px;top:360.0px;width:124.0px;height:104.0px;background:#00B050;border:3px solid #2F528F;border-radius:14px"></div>
<div class="a" style="left:345.0px;top:405.0px;width:105.0px;height:10.0px;background:#b0b0b0;"></div>
<div class="a" style="left:110.0px;top:470.0px;width:105.0px;height:10.0px;background:#b0b0b0;"></div>
<div class="a" style="left:53.0px;top:528.0px;width:45.0px;height:147.0px;background:#4472C4;"></div>
<div class="a" style="left:139.5px;top:528.0px;width:45.0px;height:147.0px;background:#4472C4;"></div>
<div class="a" style="left:229.8px;top:528.0px;width:45.0px;height:147.0px;background:#4472C4;"></div>
<div class="a" style="left:340.0px;top:528.0px;width:44.0px;height:147.0px;background:#FFC000;border:5px solid #000;"></div>
<div class="a" style="left:444.0px;top:528.0px;width:44.0px;height:147.0px;background:#FF0000;border:5px solid #000;"></div>
<div class="a" style="left:40.0px;top:705.0px;width:470.0px;height:10.0px;background:#b5b5b5;"></div>
<div class="a" style="left:677.5px;top:347.5px;width:95.0px;height:58.0px;background:#7030A0;border:3px solid #2F528F;border-radius:8px"></div>
<div class="a" style="left:804.0px;top:347.5px;width:95.0px;height:58.0px;background:#548235;border:3px solid #2F528F;border-radius:8px"></div>
<div class="a" style="left:695.5px;top:362.5px;width:95.0px;height:58.0px;background:#7030A0;border:3px solid #2F528F;border-radius:8px"></div>
<div class="a" style="left:822.0px;top:362.5px;width:95.0px;height:58.0px;background:#548235;border:3px solid #2F528F;border-radius:8px"></div>
<div class="a" style="left:713.5px;top:377.5px;width:95.0px;height:58.0px;background:#7030A0;border:3px solid #2F528F;border-radius:8px"></div>
<div class="a" style="left:840.0px;top:377.5px;width:95.0px;height:58.0px;background:#548235;border:3px solid #2F528F;border-radius:8px"></div>
<div class="a" style="left:952.0px;top:347.5px;width:93.0px;height:52.0px;background:#00B050;border:3px solid #2F528F;border-radius:8px"></div>
<div class="a" style="left:1050.0px;top:360.0px;width:110.0px;height:9.0px;background:#b0b0b0;"></div>
<div class="a" style="left:735.0px;top:462.0px;width:175.0px;height:9.0px;background:#b0b0b0;"></div>
<div class="a" style="left:740.0px;top:533.0px;width:95.0px;height:9.0px;background:#b0b0b0;"></div>
<div class="a" style="left:865.6px;top:520.6px;width:45.0px;height:150.0px;background:#4472C4;"></div>
<div class="a" style="left:925.8px;top:520.6px;width:45.0px;height:150.0px;background:#4472C4;"></div>
<div class="a" style="left:997.0px;top:520.6px;width:45.0px;height:150.0px;background:#4472C4;"></div>
<div class="a" style="left:1106.0px;top:522.0px;width:44.0px;height:148.0px;background:#FFC000;border:5px solid #000;"></div>
<div class="a" style="left:1210.0px;top:522.0px;width:44.0px;height:148.0px;background:#FF0000;border:5px solid #000;"></div>
<div class="a" style="left:850.0px;top:695.0px;width:470.0px;height:10.0px;background:#b5b5b5;"></div></div></div>
<div class="a" style="left:46px;top:608px;width:207px;height:117.3px;background:#C6C6C6"></div><div class="a" style="left:47px;top:609px;width:205px;height:115.3px;overflow:hidden;background:#fff"><div class="th"><div class="st" style="left:10px;top:17px;font-size:69px;font-weight:bold;color:#2E75B6;letter-spacing:0.2px">Auto Testing</div><div class="a" style="left:0.0px;top:106.0px;width:1333.0px;height:6.0px;background:#0070C0;"></div>
<div class="a" style="left:1.7px;top:106.0px;width:1331.0px;height:644.0px;background:#282C34;"></div>
<div class="a" style="left:26.0px;top:119.0px;width:50.0px;height:8.0px;background:#3a3f4b;"></div>
<div class="a" style="left:20.0px;top:119.0px;width:8.0px;height:8.0px;background:#c0573a;"></div>
<div class="a" style="left:33.0px;top:140.0px;width:40.0px;height:6.0px;background:#3a3f4b;"></div>
<div class="a" style="left:30.0px;top:162.0px;width:20.0px;height:3.5px;background:#3b4150;"></div>
<div class="a" style="left:124.0px;top:162.0px;width:69.0px;height:4.5px;background:#8a909a;"></div>
<div class="a" style="left:200.0px;top:162.0px;width:36.0px;height:4.5px;background:#9b66b0;"></div>
<div class="a" style="left:243.0px;top:162.0px;width:77.0px;height:4.5px;background:#5a8fc0;"></div>
<div class="a" style="left:327.0px;top:162.0px;width:35.0px;height:4.5px;background:#7d9c66;"></div>
<div class="a" style="left:30.0px;top:176.3px;width:20.0px;height:3.5px;background:#3b4150;"></div>
<div class="a" style="left:82.0px;top:176.3px;width:80.0px;height:4.5px;background:#5C6370;"></div>
<div class="a" style="left:30.0px;top:190.6px;width:20.0px;height:3.5px;background:#3b4150;"></div>
<div class="a" style="left:68.0px;top:190.6px;width:62.0px;height:4.5px;background:#5a8fc0;"></div>
<div class="a" style="left:137.0px;top:190.6px;width:32.0px;height:4.5px;background:#8a909a;"></div>
<div class="a" style="left:176.0px;top:190.6px;width:13.0px;height:4.5px;background:#5C6370;"></div>
<div class="a" style="left:196.0px;top:190.6px;width:79.0px;height:4.5px;background:#7d9c66;"></div>
<div class="a" style="left:282.0px;top:190.6px;width:19.0px;height:4.5px;background:#7d9c66;"></div>
<div class="a" style="left:30.0px;top:204.9px;width:20.0px;height:3.5px;background:#3b4150;"></div>
<div class="a" style="left:82.0px;top:204.9px;width:15.0px;height:4.5px;background:#5C6370;"></div>
<div class="a" style="left:104.0px;top:204.9px;width:71.0px;height:4.5px;background:#b3616a;"></div>
<div class="a" style="left:182.0px;top:204.9px;width:68.0px;height:4.5px;background:#8a909a;"></div>
<div class="a" style="left:257.0px;top:204.9px;width:37.0px;height:4.5px;background:#8a909a;"></div>
<div class="a" style="left:301.0px;top:204.9px;width:41.0px;height:4.5px;background:#a8835e;"></div>
<div class="a" style="left:30.0px;top:219.2px;width:20.0px;height:3.5px;background:#3b4150;"></div>
<div class="a" style="left:68.0px;top:219.2px;width:70.0px;height:4.5px;background:#a8835e;"></div>
<div class="a" style="left:30.0px;top:233.5px;width:20.0px;height:3.5px;background:#3b4150;"></div>
<div class="a" style="left:124.0px;top:233.5px;width:44.0px;height:4.5px;background:#b3616a;"></div>
<div class="a" style="left:30.0px;top:247.8px;width:20.0px;height:3.5px;background:#3b4150;"></div>
<div class="a" style="left:124.0px;top:247.8px;width:15.0px;height:4.5px;background:#7d9c66;"></div>
<div class="a" style="left:146.0px;top:247.8px;width:25.0px;height:4.5px;background:#5a8fc0;"></div>
<div class="a" style="left:178.0px;top:247.8px;width:25.0px;height:4.5px;background:#5C6370;"></div>
<div class="a" style="left:30.0px;top:262.1px;width:20.0px;height:3.5px;background:#3b4150;"></div>
<div class="a" style="left:68.0px;top:262.1px;width:12.0px;height:4.5px;background:#9b66b0;"></div>
<div class="a" style="left:30.0px;top:276.4px;width:20.0px;height:3.5px;background:#3b4150;"></div>
<div class="a" style="left:68.0px;top:276.4px;width:60.0px;height:4.5px;background:#a8835e;"></div>
<div class="a" style="left:135.0px;top:276.4px;width:62.0px;height:4.5px;background:#5a8fc0;"></div>
<div class="a" style="left:204.0px;top:276.4px;width:21.0px;height:4.5px;background:#8a909a;"></div>
<div class="a" style="left:232.0px;top:276.4px;width:37.0px;height:4.5px;background:#5C6370;"></div>
<div class="a" style="left:30.0px;top:290.7px;width:20.0px;height:3.5px;background:#3b4150;"></div>
<div class="a" style="left:96.0px;top:290.7px;width:51.0px;height:4.5px;background:#b3616a;"></div>
<div class="a" style="left:30.0px;top:305.0px;width:20.0px;height:3.5px;background:#3b4150;"></div>
<div class="a" style="left:30.0px;top:319.3px;width:20.0px;height:3.5px;background:#3b4150;"></div>
<div class="a" style="left:68.0px;top:319.3px;width:43.0px;height:4.5px;background:#a8835e;"></div>
<div class="a" style="left:118.0px;top:319.3px;width:24.0px;height:4.5px;background:#7d9c66;"></div>
<div class="a" style="left:30.0px;top:333.6px;width:20.0px;height:3.5px;background:#3b4150;"></div>
<div class="a" style="left:30.0px;top:347.9px;width:20.0px;height:3.5px;background:#3b4150;"></div>
<div class="a" style="left:82.0px;top:347.9px;width:36.0px;height:4.5px;background:#5a8fc0;"></div>
<div class="a" style="left:125.0px;top:347.9px;width:77.0px;height:4.5px;background:#9b66b0;"></div>
<div class="a" style="left:209.0px;top:347.9px;width:28.0px;height:4.5px;background:#5a8fc0;"></div>
<div class="a" style="left:244.0px;top:347.9px;width:61.0px;height:4.5px;background:#7d9c66;"></div>
<div class="a" style="left:312.0px;top:347.9px;width:62.0px;height:4.5px;background:#5a8fc0;"></div>
<div class="a" style="left:30.0px;top:362.2px;width:20.0px;height:3.5px;background:#3b4150;"></div>
<div class="a" style="left:68.0px;top:362.2px;width:50.0px;height:4.5px;background:#7d9c66;"></div>
<div class="a" style="left:125.0px;top:362.2px;width:38.0px;height:4.5px;background:#9b66b0;"></div>
<div class="a" style="left:170.0px;top:362.2px;width:62.0px;height:4.5px;background:#5C6370;"></div>
<div class="a" style="left:30.0px;top:376.5px;width:20.0px;height:3.5px;background:#3b4150;"></div>
<div class="a" style="left:124.0px;top:376.5px;width:17.0px;height:4.5px;background:#9b66b0;"></div>
<div class="a" style="left:30.0px;top:390.8px;width:20.0px;height:3.5px;background:#3b4150;"></div>
<div class="a" style="left:96.0px;top:390.8px;width:54.0px;height:4.5px;background:#5C6370;"></div>
<div class="a" style="left:30.0px;top:405.1px;width:20.0px;height:3.5px;background:#3b4150;"></div>
<div class="a" style="left:68.0px;top:405.1px;width:23.0px;height:4.5px;background:#9b66b0;"></div>
<div class="a" style="left:30.0px;top:419.4px;width:20.0px;height:3.5px;background:#3b4150;"></div>
<div class="a" style="left:82.0px;top:419.4px;width:59.0px;height:4.5px;background:#b3616a;"></div>
<div class="a" style="left:30.0px;top:433.7px;width:20.0px;height:3.5px;background:#3b4150;"></div>
<div class="a" style="left:82.0px;top:433.7px;width:73.0px;height:4.5px;background:#5C6370;"></div>
<div class="a" style="left:162.0px;top:433.7px;width:29.0px;height:4.5px;background:#5C6370;"></div>
<div class="a" style="left:198.0px;top:433.7px;width:61.0px;height:4.5px;background:#9b66b0;"></div>
<div class="a" style="left:266.0px;top:433.7px;width:31.0px;height:4.5px;background:#b3616a;"></div>
<div class="a" style="left:304.0px;top:433.7px;width:41.0px;height:4.5px;background:#5C6370;"></div>
<div class="a" style="left:30.0px;top:448.0px;width:20.0px;height:3.5px;background:#3b4150;"></div>
<div class="a" style="left:82.0px;top:448.0px;width:37.0px;height:4.5px;background:#a8835e;"></div>
<div class="a" style="left:126.0px;top:448.0px;width:61.0px;height:4.5px;background:#5a8fc0;"></div>
<div class="a" style="left:30.0px;top:462.3px;width:20.0px;height:3.5px;background:#3b4150;"></div>
<div class="a" style="left:110.0px;top:462.3px;width:25.0px;height:4.5px;background:#7d9c66;"></div>
<div class="a" style="left:30.0px;top:476.6px;width:20.0px;height:3.5px;background:#3b4150;"></div>
<div class="a" style="left:30.0px;top:490.9px;width:20.0px;height:3.5px;background:#3b4150;"></div>
<div class="a" style="left:82.0px;top:490.9px;width:44.0px;height:4.5px;background:#5a8fc0;"></div>
<div class="a" style="left:133.0px;top:490.9px;width:74.0px;height:4.5px;background:#b3616a;"></div>
<div class="a" style="left:214.0px;top:490.9px;width:78.0px;height:4.5px;background:#9b66b0;"></div>
<div class="a" style="left:299.0px;top:490.9px;width:20.0px;height:4.5px;background:#9b66b0;"></div>
<div class="a" style="left:30.0px;top:505.2px;width:20.0px;height:3.5px;background:#3b4150;"></div>
<div class="a" style="left:124.0px;top:505.2px;width:21.0px;height:4.5px;background:#b3616a;"></div>
<div class="a" style="left:152.0px;top:505.2px;width:39.0px;height:4.5px;background:#9b66b0;"></div>
<div class="a" style="left:198.0px;top:505.2px;width:14.0px;height:4.5px;background:#7d9c66;"></div>
<div class="a" style="left:219.0px;top:505.2px;width:46.0px;height:4.5px;background:#5a8fc0;"></div>
<div class="a" style="left:272.0px;top:505.2px;width:69.0px;height:4.5px;background:#9b66b0;"></div>
<div class="a" style="left:30.0px;top:519.5px;width:20.0px;height:3.5px;background:#3b4150;"></div>
<div class="a" style="left:30.0px;top:533.8px;width:20.0px;height:3.5px;background:#3b4150;"></div>
<div class="a" style="left:30.0px;top:548.1px;width:20.0px;height:3.5px;background:#3b4150;"></div>
<div class="a" style="left:124.0px;top:548.1px;width:23.0px;height:4.5px;background:#b3616a;"></div>
<div class="a" style="left:154.0px;top:548.1px;width:29.0px;height:4.5px;background:#5a8fc0;"></div>
<div class="a" style="left:30.0px;top:562.4px;width:20.0px;height:3.5px;background:#3b4150;"></div>
<div class="a" style="left:124.0px;top:562.4px;width:29.0px;height:4.5px;background:#8a909a;"></div>
<div class="a" style="left:160.0px;top:562.4px;width:16.0px;height:4.5px;background:#7d9c66;"></div>
<div class="a" style="left:183.0px;top:562.4px;width:72.0px;height:4.5px;background:#b3616a;"></div>
<div class="a" style="left:262.0px;top:562.4px;width:51.0px;height:4.5px;background:#7d9c66;"></div>
<div class="a" style="left:320.0px;top:562.4px;width:14.0px;height:4.5px;background:#8a909a;"></div>
<div class="a" style="left:30.0px;top:576.7px;width:20.0px;height:3.5px;background:#3b4150;"></div>
<div class="a" style="left:110.0px;top:576.7px;width:51.0px;height:4.5px;background:#b3616a;"></div>
<div class="a" style="left:30.0px;top:591.0px;width:20.0px;height:3.5px;background:#3b4150;"></div>
<div class="a" style="left:30.0px;top:605.3px;width:20.0px;height:3.5px;background:#3b4150;"></div>
<div class="a" style="left:30.0px;top:619.6px;width:20.0px;height:3.5px;background:#3b4150;"></div>
<div class="a" style="left:96.0px;top:619.6px;width:28.0px;height:4.5px;background:#5C6370;"></div>
<div class="a" style="left:30.0px;top:633.9px;width:20.0px;height:3.5px;background:#3b4150;"></div>
<div class="a" style="left:96.0px;top:633.9px;width:22.0px;height:4.5px;background:#a8835e;"></div>
<div class="a" style="left:125.0px;top:633.9px;width:72.0px;height:4.5px;background:#7d9c66;"></div>
<div class="a" style="left:204.0px;top:633.9px;width:65.0px;height:4.5px;background:#5C6370;"></div>
<div class="a" style="left:30.0px;top:648.2px;width:20.0px;height:3.5px;background:#3b4150;"></div>
<div class="a" style="left:30.0px;top:662.5px;width:20.0px;height:3.5px;background:#3b4150;"></div>
<div class="a" style="left:68.0px;top:662.5px;width:60.0px;height:4.5px;background:#5a8fc0;"></div>
<div class="a" style="left:135.0px;top:662.5px;width:13.0px;height:4.5px;background:#8a909a;"></div>
<div class="a" style="left:155.0px;top:662.5px;width:21.0px;height:4.5px;background:#7d9c66;"></div>
<div class="a" style="left:183.0px;top:662.5px;width:23.0px;height:4.5px;background:#a8835e;"></div>
<div class="a" style="left:213.0px;top:662.5px;width:26.0px;height:4.5px;background:#b3616a;"></div>
<div class="a" style="left:30.0px;top:676.8px;width:20.0px;height:3.5px;background:#3b4150;"></div>
<div class="a" style="left:96.0px;top:676.8px;width:70.0px;height:4.5px;background:#5a8fc0;"></div>
<div class="a" style="left:173.0px;top:676.8px;width:71.0px;height:4.5px;background:#5C6370;"></div>
<div class="a" style="left:251.0px;top:676.8px;width:22.0px;height:4.5px;background:#8a909a;"></div>
<div class="a" style="left:280.0px;top:676.8px;width:77.0px;height:4.5px;background:#7d9c66;"></div>
<div class="a" style="left:30.0px;top:691.1px;width:20.0px;height:3.5px;background:#3b4150;"></div>
<div class="a" style="left:68.0px;top:691.1px;width:14.0px;height:4.5px;background:#9b66b0;"></div>
<div class="a" style="left:89.0px;top:691.1px;width:26.0px;height:4.5px;background:#5a8fc0;"></div>
<div class="a" style="left:122.0px;top:691.1px;width:74.0px;height:4.5px;background:#b3616a;"></div>
<div class="a" style="left:203.0px;top:691.1px;width:13.0px;height:4.5px;background:#b3616a;"></div>
<div class="a" style="left:30.0px;top:705.4px;width:20.0px;height:3.5px;background:#3b4150;"></div>
<div class="a" style="left:124.0px;top:705.4px;width:78.0px;height:4.5px;background:#9b66b0;"></div>
<div class="a" style="left:209.0px;top:705.4px;width:55.0px;height:4.5px;background:#a8835e;"></div>
<div class="a" style="left:30.0px;top:719.7px;width:20.0px;height:3.5px;background:#3b4150;"></div>
<div class="a" style="left:110.0px;top:719.7px;width:53.0px;height:4.5px;background:#5a8fc0;"></div>
<div class="a" style="left:170.0px;top:719.7px;width:44.0px;height:4.5px;background:#9b66b0;"></div>
<div class="a" style="left:30.0px;top:734.0px;width:20.0px;height:3.5px;background:#3b4150;"></div>
<div class="a" style="left:82.0px;top:734.0px;width:61.0px;height:4.5px;background:#9b66b0;"></div>
<div class="a" style="left:150.0px;top:734.0px;width:52.0px;height:4.5px;background:#9b66b0;"></div>
<div class="a" style="left:30.0px;top:748.3px;width:20.0px;height:3.5px;background:#3b4150;"></div>
<div class="a" style="left:463.0px;top:119.0px;width:50.0px;height:8.0px;background:#3a3f4b;"></div>
<div class="a" style="left:457.0px;top:119.0px;width:8.0px;height:8.0px;background:#c0573a;"></div>
<div class="a" style="left:470.0px;top:140.0px;width:40.0px;height:6.0px;background:#3a3f4b;"></div>
<div class="a" style="left:467.0px;top:162.0px;width:20.0px;height:3.5px;background:#3b4150;"></div>
<div class="a" style="left:505.0px;top:162.0px;width:47.0px;height:4.5px;background:#5C6370;"></div>
<div class="a" style="left:467.0px;top:176.3px;width:20.0px;height:3.5px;background:#3b4150;"></div>
<div class="a" style="left:467.0px;top:190.6px;width:20.0px;height:3.5px;background:#3b4150;"></div>
<div class="a" style="left:533.0px;top:190.6px;width:64.0px;height:4.5px;background:#5a8fc0;"></div>
<div class="a" style="left:604.0px;top:190.6px;width:78.0px;height:4.5px;background:#5a8fc0;"></div>
<div class="a" style="left:467.0px;top:204.9px;width:20.0px;height:3.5px;background:#3b4150;"></div>
<div class="a" style="left:561.0px;top:204.9px;width:53.0px;height:4.5px;background:#7d9c66;"></div>
<div class="a" style="left:621.0px;top:204.9px;width:16.0px;height:4.5px;background:#b3616a;"></div>
<div class="a" style="left:644.0px;top:204.9px;width:17.0px;height:4.5px;background:#a8835e;"></div>
<div class="a" style="left:668.0px;top:204.9px;width:47.0px;height:4.5px;background:#8a909a;"></div>
<div class="a" style="left:467.0px;top:219.2px;width:20.0px;height:3.5px;background:#3b4150;"></div>
<div class="a" style="left:561.0px;top:219.2px;width:29.0px;height:4.5px;background:#5a8fc0;"></div>
<div class="a" style="left:467.0px;top:233.5px;width:20.0px;height:3.5px;background:#3b4150;"></div>
<div class="a" style="left:505.0px;top:233.5px;width:42.0px;height:4.5px;background:#5C6370;"></div>
<div class="a" style="left:554.0px;top:233.5px;width:30.0px;height:4.5px;background:#5C6370;"></div>
<div class="a" style="left:591.0px;top:233.5px;width:18.0px;height:4.5px;background:#a8835e;"></div>
<div class="a" style="left:467.0px;top:247.8px;width:20.0px;height:3.5px;background:#3b4150;"></div>
<div class="a" style="left:467.0px;top:262.1px;width:20.0px;height:3.5px;background:#3b4150;"></div>
<div class="a" style="left:467.0px;top:276.4px;width:20.0px;height:3.5px;background:#3b4150;"></div>
<div class="a" style="left:533.0px;top:276.4px;width:37.0px;height:4.5px;background:#9b66b0;"></div>
<div class="a" style="left:467.0px;top:290.7px;width:20.0px;height:3.5px;background:#3b4150;"></div>
<div class="a" style="left:533.0px;top:290.7px;width:13.0px;height:4.5px;background:#5C6370;"></div>
<div class="a" style="left:553.0px;top:290.7px;width:72.0px;height:4.5px;background:#8a909a;"></div>
<div class="a" style="left:467.0px;top:305.0px;width:20.0px;height:3.5px;background:#3b4150;"></div>
<div class="a" style="left:519.0px;top:305.0px;width:46.0px;height:4.5px;background:#5C6370;"></div>
<div class="a" style="left:572.0px;top:305.0px;width:56.0px;height:4.5px;background:#8a909a;"></div>
<div class="a" style="left:467.0px;top:319.3px;width:20.0px;height:3.5px;background:#3b4150;"></div>
<div class="a" style="left:561.0px;top:319.3px;width:32.0px;height:4.5px;background:#5a8fc0;"></div>
<div class="a" style="left:600.0px;top:319.3px;width:40.0px;height:4.5px;background:#7d9c66;"></div>
<div class="a" style="left:647.0px;top:319.3px;width:64.0px;height:4.5px;background:#a8835e;"></div>
<div class="a" style="left:718.0px;top:319.3px;width:61.0px;height:4.5px;background:#9b66b0;"></div>
<div class="a" style="left:786.0px;top:319.3px;width:69.0px;height:4.5px;background:#5a8fc0;"></div>
<div class="a" style="left:467.0px;top:333.6px;width:20.0px;height:3.5px;background:#3b4150;"></div>
<div class="a" style="left:505.0px;top:333.6px;width:76.0px;height:4.5px;background:#5C6370;"></div>
<div class="a" style="left:588.0px;top:333.6px;width:55.0px;height:4.5px;background:#5a8fc0;"></div>
<div class="a" style="left:650.0px;top:333.6px;width:53.0px;height:4.5px;background:#a8835e;"></div>
<div class="a" style="left:710.0px;top:333.6px;width:38.0px;height:4.5px;background:#7d9c66;"></div>
<div class="a" style="left:467.0px;top:347.9px;width:20.0px;height:3.5px;background:#3b4150;"></div>
<div class="a" style="left:505.0px;top:347.9px;width:43.0px;height:4.5px;background:#5a8fc0;"></div>
<div class="a" style="left:555.0px;top:347.9px;width:23.0px;height:4.5px;background:#b3616a;"></div>
<div class="a" style="left:467.0px;top:362.2px;width:20.0px;height:3.5px;background:#3b4150;"></div>
<div class="a" style="left:533.0px;top:362.2px;width:14.0px;height:4.5px;background:#b3616a;"></div>
<div class="a" style="left:554.0px;top:362.2px;width:76.0px;height:4.5px;background:#7d9c66;"></div>
<div class="a" style="left:637.0px;top:362.2px;width:16.0px;height:4.5px;background:#5a8fc0;"></div>
<div class="a" style="left:467.0px;top:376.5px;width:20.0px;height:3.5px;background:#3b4150;"></div>
<div class="a" style="left:547.0px;top:376.5px;width:74.0px;height:4.5px;background:#7d9c66;"></div>
<div class="a" style="left:628.0px;top:376.5px;width:39.0px;height:4.5px;background:#5C6370;"></div>
<div class="a" style="left:674.0px;top:376.5px;width:20.0px;height:4.5px;background:#5a8fc0;"></div>
<div class="a" style="left:467.0px;top:390.8px;width:20.0px;height:3.5px;background:#3b4150;"></div>
<div class="a" style="left:519.0px;top:390.8px;width:54.0px;height:4.5px;background:#a8835e;"></div>
<div class="a" style="left:580.0px;top:390.8px;width:29.0px;height:4.5px;background:#5a8fc0;"></div>
<div class="a" style="left:616.0px;top:390.8px;width:31.0px;height:4.5px;background:#8a909a;"></div>
<div class="a" style="left:654.0px;top:390.8px;width:78.0px;height:4.5px;background:#5C6370;"></div>
<div class="a" style="left:739.0px;top:390.8px;width:68.0px;height:4.5px;background:#5a8fc0;"></div>
<div class="a" style="left:467.0px;top:405.1px;width:20.0px;height:3.5px;background:#3b4150;"></div>
<div class="a" style="left:505.0px;top:405.1px;width:68.0px;height:4.5px;background:#8a909a;"></div>
<div class="a" style="left:580.0px;top:405.1px;width:49.0px;height:4.5px;background:#5C6370;"></div>
<div class="a" style="left:467.0px;top:419.4px;width:20.0px;height:3.5px;background:#3b4150;"></div>
<div class="a" style="left:519.0px;top:419.4px;width:77.0px;height:4.5px;background:#5C6370;"></div>
<div class="a" style="left:603.0px;top:419.4px;width:44.0px;height:4.5px;background:#b3616a;"></div>
<div class="a" style="left:654.0px;top:419.4px;width:60.0px;height:4.5px;background:#5C6370;"></div>
<div class="a" style="left:721.0px;top:419.4px;width:38.0px;height:4.5px;background:#b3616a;"></div>
<div class="a" style="left:766.0px;top:419.4px;width:30.0px;height:4.5px;background:#8a909a;"></div>
<div class="a" style="left:467.0px;top:433.7px;width:20.0px;height:3.5px;background:#3b4150;"></div>
<div class="a" style="left:561.0px;top:433.7px;width:37.0px;height:4.5px;background:#5a8fc0;"></div>
<div class="a" style="left:605.0px;top:433.7px;width:80.0px;height:4.5px;background:#7d9c66;"></div>
<div class="a" style="left:692.0px;top:433.7px;width:76.0px;height:4.5px;background:#7d9c66;"></div>
<div class="a" style="left:775.0px;top:433.7px;width:60.0px;height:4.5px;background:#7d9c66;"></div>
<div class="a" style="left:467.0px;top:448.0px;width:20.0px;height:3.5px;background:#3b4150;"></div>
<div class="a" style="left:505.0px;top:448.0px;width:63.0px;height:4.5px;background:#8a909a;"></div>
<div class="a" style="left:575.0px;top:448.0px;width:27.0px;height:4.5px;background:#5a8fc0;"></div>
<div class="a" style="left:609.0px;top:448.0px;width:23.0px;height:4.5px;background:#a8835e;"></div>
<div class="a" style="left:639.0px;top:448.0px;width:33.0px;height:4.5px;background:#7d9c66;"></div>
<div class="a" style="left:679.0px;top:448.0px;width:80.0px;height:4.5px;background:#5a8fc0;"></div>
<div class="a" style="left:467.0px;top:462.3px;width:20.0px;height:3.5px;background:#3b4150;"></div>
<div class="a" style="left:547.0px;top:462.3px;width:43.0px;height:4.5px;background:#5a8fc0;"></div>
<div class="a" style="left:597.0px;top:462.3px;width:75.0px;height:4.5px;background:#9b66b0;"></div>
<div class="a" style="left:679.0px;top:462.3px;width:55.0px;height:4.5px;background:#5a8fc0;"></div>
<div class="a" style="left:467.0px;top:476.6px;width:20.0px;height:3.5px;background:#3b4150;"></div>
<div class="a" style="left:547.0px;top:476.6px;width:52.0px;height:4.5px;background:#7d9c66;"></div>
<div class="a" style="left:606.0px;top:476.6px;width:36.0px;height:4.5px;background:#5a8fc0;"></div>
<div class="a" style="left:649.0px;top:476.6px;width:15.0px;height:4.5px;background:#b3616a;"></div>
<div class="a" style="left:671.0px;top:476.6px;width:28.0px;height:4.5px;background:#a8835e;"></div>
<div class="a" style="left:706.0px;top:476.6px;width:14.0px;height:4.5px;background:#7d9c66;"></div>
<div class="a" style="left:467.0px;top:490.9px;width:20.0px;height:3.5px;background:#3b4150;"></div>
<div class="a" style="left:519.0px;top:490.9px;width:48.0px;height:4.5px;background:#b3616a;"></div>
<div class="a" style="left:467.0px;top:505.2px;width:20.0px;height:3.5px;background:#3b4150;"></div>
<div class="a" style="left:519.0px;top:505.2px;width:75.0px;height:4.5px;background:#7d9c66;"></div>
<div class="a" style="left:601.0px;top:505.2px;width:75.0px;height:4.5px;background:#a8835e;"></div>
<div class="a" style="left:683.0px;top:505.2px;width:27.0px;height:4.5px;background:#5C6370;"></div>
<div class="a" style="left:717.0px;top:505.2px;width:77.0px;height:4.5px;background:#8a909a;"></div>
<div class="a" style="left:801.0px;top:505.2px;width:44.0px;height:4.5px;background:#a8835e;"></div>
<div class="a" style="left:467.0px;top:519.5px;width:20.0px;height:3.5px;background:#3b4150;"></div>
<div class="a" style="left:561.0px;top:519.5px;width:14.0px;height:4.5px;background:#5a8fc0;"></div>
<div class="a" style="left:582.0px;top:519.5px;width:64.0px;height:4.5px;background:#5C6370;"></div>
<div class="a" style="left:653.0px;top:519.5px;width:79.0px;height:4.5px;background:#8a909a;"></div>
<div class="a" style="left:739.0px;top:519.5px;width:32.0px;height:4.5px;background:#8a909a;"></div>
<div class="a" style="left:467.0px;top:533.8px;width:20.0px;height:3.5px;background:#3b4150;"></div>
<div class="a" style="left:561.0px;top:533.8px;width:79.0px;height:4.5px;background:#9b66b0;"></div>
<div class="a" style="left:647.0px;top:533.8px;width:29.0px;height:4.5px;background:#9b66b0;"></div>
<div class="a" style="left:467.0px;top:548.1px;width:20.0px;height:3.5px;background:#3b4150;"></div>
<div class="a" style="left:533.0px;top:548.1px;width:52.0px;height:4.5px;background:#8a909a;"></div>
<div class="a" style="left:592.0px;top:548.1px;width:52.0px;height:4.5px;background:#9b66b0;"></div>
<div class="a" style="left:467.0px;top:562.4px;width:20.0px;height:3.5px;background:#3b4150;"></div>
<div class="a" style="left:519.0px;top:562.4px;width:29.0px;height:4.5px;background:#9b66b0;"></div>
<div class="a" style="left:467.0px;top:576.7px;width:20.0px;height:3.5px;background:#3b4150;"></div>
<div class="a" style="left:467.0px;top:591.0px;width:20.0px;height:3.5px;background:#3b4150;"></div>
<div class="a" style="left:467.0px;top:605.3px;width:20.0px;height:3.5px;background:#3b4150;"></div>
<div class="a" style="left:547.0px;top:605.3px;width:28.0px;height:4.5px;background:#9b66b0;"></div>
<div class="a" style="left:582.0px;top:605.3px;width:63.0px;height:4.5px;background:#a8835e;"></div>
<div class="a" style="left:652.0px;top:605.3px;width:14.0px;height:4.5px;background:#7d9c66;"></div>
<div class="a" style="left:673.0px;top:605.3px;width:37.0px;height:4.5px;background:#8a909a;"></div>
<div class="a" style="left:467.0px;top:619.6px;width:20.0px;height:3.5px;background:#3b4150;"></div>
<div class="a" style="left:533.0px;top:619.6px;width:76.0px;height:4.5px;background:#a8835e;"></div>
<div class="a" style="left:467.0px;top:633.9px;width:20.0px;height:3.5px;background:#3b4150;"></div>
<div class="a" style="left:561.0px;top:633.9px;width:21.0px;height:4.5px;background:#5a8fc0;"></div>
<div class="a" style="left:589.0px;top:633.9px;width:25.0px;height:4.5px;background:#7d9c66;"></div>
<div class="a" style="left:467.0px;top:648.2px;width:20.0px;height:3.5px;background:#3b4150;"></div>
<div class="a" style="left:467.0px;top:662.5px;width:20.0px;height:3.5px;background:#3b4150;"></div>
<div class="a" style="left:561.0px;top:662.5px;width:73.0px;height:4.5px;background:#9b66b0;"></div>
<div class="a" style="left:641.0px;top:662.5px;width:36.0px;height:4.5px;background:#9b66b0;"></div>
<div class="a" style="left:684.0px;top:662.5px;width:26.0px;height:4.5px;background:#9b66b0;"></div>
<div class="a" style="left:717.0px;top:662.5px;width:34.0px;height:4.5px;background:#5C6370;"></div>
<div class="a" style="left:758.0px;top:662.5px;width:32.0px;height:4.5px;background:#b3616a;"></div>
<div class="a" style="left:467.0px;top:676.8px;width:20.0px;height:3.5px;background:#3b4150;"></div>
<div class="a" style="left:505.0px;top:676.8px;width:19.0px;height:4.5px;background:#9b66b0;"></div>
<div class="a" style="left:531.0px;top:676.8px;width:71.0px;height:4.5px;background:#7d9c66;"></div>
<div class="a" style="left:609.0px;top:676.8px;width:24.0px;height:4.5px;background:#b3616a;"></div>
<div class="a" style="left:640.0px;top:676.8px;width:62.0px;height:4.5px;background:#5a8fc0;"></div>
<div class="a" style="left:709.0px;top:676.8px;width:66.0px;height:4.5px;background:#8a909a;"></div>
<div class="a" style="left:467.0px;top:691.1px;width:20.0px;height:3.5px;background:#3b4150;"></div>
<div class="a" style="left:519.0px;top:691.1px;width:59.0px;height:4.5px;background:#7d9c66;"></div>
<div class="a" style="left:585.0px;top:691.1px;width:17.0px;height:4.5px;background:#5C6370;"></div>
<div class="a" style="left:609.0px;top:691.1px;width:37.0px;height:4.5px;background:#9b66b0;"></div>
<div class="a" style="left:653.0px;top:691.1px;width:64.0px;height:4.5px;background:#5a8fc0;"></div>
<div class="a" style="left:724.0px;top:691.1px;width:58.0px;height:4.5px;background:#a8835e;"></div>
<div class="a" style="left:467.0px;top:705.4px;width:20.0px;height:3.5px;background:#3b4150;"></div>
<div class="a" style="left:519.0px;top:705.4px;width:33.0px;height:4.5px;background:#7d9c66;"></div>
<div class="a" style="left:559.0px;top:705.4px;width:77.0px;height:4.5px;background:#5C6370;"></div>
<div class="a" style="left:643.0px;top:705.4px;width:13.0px;height:4.5px;background:#b3616a;"></div>
<div class="a" style="left:663.0px;top:705.4px;width:22.0px;height:4.5px;background:#5C6370;"></div>
<div class="a" style="left:692.0px;top:705.4px;width:63.0px;height:4.5px;background:#8a909a;"></div>
<div class="a" style="left:467.0px;top:719.7px;width:20.0px;height:3.5px;background:#3b4150;"></div>
<div class="a" style="left:561.0px;top:719.7px;width:55.0px;height:4.5px;background:#5C6370;"></div>
<div class="a" style="left:623.0px;top:719.7px;width:45.0px;height:4.5px;background:#b3616a;"></div>
<div class="a" style="left:675.0px;top:719.7px;width:26.0px;height:4.5px;background:#a8835e;"></div>
<div class="a" style="left:708.0px;top:719.7px;width:32.0px;height:4.5px;background:#5C6370;"></div>
<div class="a" style="left:747.0px;top:719.7px;width:63.0px;height:4.5px;background:#9b66b0;"></div>
<div class="a" style="left:467.0px;top:734.0px;width:20.0px;height:3.5px;background:#3b4150;"></div>
<div class="a" style="left:561.0px;top:734.0px;width:67.0px;height:4.5px;background:#5C6370;"></div>
<div class="a" style="left:635.0px;top:734.0px;width:35.0px;height:4.5px;background:#5a8fc0;"></div>
<div class="a" style="left:677.0px;top:734.0px;width:38.0px;height:4.5px;background:#a8835e;"></div>
<div class="a" style="left:467.0px;top:748.3px;width:20.0px;height:3.5px;background:#3b4150;"></div>
<div class="a" style="left:533.0px;top:748.3px;width:72.0px;height:4.5px;background:#7d9c66;"></div>
<div class="a" style="left:612.0px;top:748.3px;width:13.0px;height:4.5px;background:#b3616a;"></div>
<div class="a" style="left:632.0px;top:748.3px;width:18.0px;height:4.5px;background:#9b66b0;"></div>
<div class="a" style="left:898.0px;top:119.0px;width:50.0px;height:8.0px;background:#3a3f4b;"></div>
<div class="a" style="left:892.0px;top:119.0px;width:8.0px;height:8.0px;background:#c0573a;"></div>
<div class="a" style="left:905.0px;top:140.0px;width:40.0px;height:6.0px;background:#3a3f4b;"></div>
<div class="a" style="left:902.0px;top:162.0px;width:20.0px;height:3.5px;background:#3b4150;"></div>
<div class="a" style="left:968.0px;top:162.0px;width:39.0px;height:4.5px;background:#a8835e;"></div>
<div class="a" style="left:1014.0px;top:162.0px;width:63.0px;height:4.5px;background:#8a909a;"></div>
<div class="a" style="left:1084.0px;top:162.0px;width:35.0px;height:4.5px;background:#8a909a;"></div>
<div class="a" style="left:902.0px;top:176.3px;width:20.0px;height:3.5px;background:#3b4150;"></div>
<div class="a" style="left:902.0px;top:190.6px;width:20.0px;height:3.5px;background:#3b4150;"></div>
<div class="a" style="left:982.0px;top:190.6px;width:27.0px;height:4.5px;background:#5C6370;"></div>
<div class="a" style="left:1016.0px;top:190.6px;width:62.0px;height:4.5px;background:#8a909a;"></div>
<div class="a" style="left:902.0px;top:204.9px;width:20.0px;height:3.5px;background:#3b4150;"></div>
<div class="a" style="left:902.0px;top:219.2px;width:20.0px;height:3.5px;background:#3b4150;"></div>
<div class="a" style="left:954.0px;top:219.2px;width:68.0px;height:4.5px;background:#5a8fc0;"></div>
<div class="a" style="left:1029.0px;top:219.2px;width:76.0px;height:4.5px;background:#7d9c66;"></div>
<div class="a" style="left:1112.0px;top:219.2px;width:37.0px;height:4.5px;background:#a8835e;"></div>
<div class="a" style="left:902.0px;top:233.5px;width:20.0px;height:3.5px;background:#3b4150;"></div>
<div class="a" style="left:940.0px;top:233.5px;width:44.0px;height:4.5px;background:#b3616a;"></div>
<div class="a" style="left:991.0px;top:233.5px;width:55.0px;height:4.5px;background:#8a909a;"></div>
<div class="a" style="left:1053.0px;top:233.5px;width:77.0px;height:4.5px;background:#5a8fc0;"></div>
<div class="a" style="left:902.0px;top:247.8px;width:20.0px;height:3.5px;background:#3b4150;"></div>
<div class="a" style="left:996.0px;top:247.8px;width:68.0px;height:4.5px;background:#5C6370;"></div>
<div class="a" style="left:902.0px;top:262.1px;width:20.0px;height:3.5px;background:#3b4150;"></div>
<div class="a" style="left:996.0px;top:262.1px;width:17.0px;height:4.5px;background:#5a8fc0;"></div>
<div class="a" style="left:1020.0px;top:262.1px;width:32.0px;height:4.5px;background:#5a8fc0;"></div>
<div class="a" style="left:1059.0px;top:262.1px;width:72.0px;height:4.5px;background:#9b66b0;"></div>
<div class="a" style="left:1138.0px;top:262.1px;width:75.0px;height:4.5px;background:#8a909a;"></div>
<div class="a" style="left:1220.0px;top:262.1px;width:19.0px;height:4.5px;background:#5a8fc0;"></div>
<div class="a" style="left:902.0px;top:276.4px;width:20.0px;height:3.5px;background:#3b4150;"></div>
<div class="a" style="left:982.0px;top:276.4px;width:79.0px;height:4.5px;background:#5a8fc0;"></div>
<div class="a" style="left:1068.0px;top:276.4px;width:51.0px;height:4.5px;background:#b3616a;"></div>
<div class="a" style="left:1126.0px;top:276.4px;width:79.0px;height:4.5px;background:#b3616a;"></div>
<div class="a" style="left:902.0px;top:290.7px;width:20.0px;height:3.5px;background:#3b4150;"></div>
<div class="a" style="left:968.0px;top:290.7px;width:48.0px;height:4.5px;background:#a8835e;"></div>
<div class="a" style="left:1023.0px;top:290.7px;width:49.0px;height:4.5px;background:#7d9c66;"></div>
<div class="a" style="left:1079.0px;top:290.7px;width:13.0px;height:4.5px;background:#5C6370;"></div>
<div class="a" style="left:1099.0px;top:290.7px;width:43.0px;height:4.5px;background:#8a909a;"></div>
<div class="a" style="left:1149.0px;top:290.7px;width:17.0px;height:4.5px;background:#a8835e;"></div>
<div class="a" style="left:902.0px;top:305.0px;width:20.0px;height:3.5px;background:#3b4150;"></div>
<div class="a" style="left:902.0px;top:319.3px;width:20.0px;height:3.5px;background:#3b4150;"></div>
<div class="a" style="left:982.0px;top:319.3px;width:52.0px;height:4.5px;background:#a8835e;"></div>
<div class="a" style="left:902.0px;top:333.6px;width:20.0px;height:3.5px;background:#3b4150;"></div>
<div class="a" style="left:996.0px;top:333.6px;width:21.0px;height:4.5px;background:#5C6370;"></div>
<div class="a" style="left:1024.0px;top:333.6px;width:40.0px;height:4.5px;background:#5a8fc0;"></div>
<div class="a" style="left:1071.0px;top:333.6px;width:73.0px;height:4.5px;background:#b3616a;"></div>
<div class="a" style="left:902.0px;top:347.9px;width:20.0px;height:3.5px;background:#3b4150;"></div>
<div class="a" style="left:954.0px;top:347.9px;width:78.0px;height:4.5px;background:#7d9c66;"></div>
<div class="a" style="left:902.0px;top:362.2px;width:20.0px;height:3.5px;background:#3b4150;"></div>
<div class="a" style="left:982.0px;top:362.2px;width:43.0px;height:4.5px;background:#8a909a;"></div>
<div class="a" style="left:1032.0px;top:362.2px;width:26.0px;height:4.5px;background:#7d9c66;"></div>
<div class="a" style="left:902.0px;top:376.5px;width:20.0px;height:3.5px;background:#3b4150;"></div>
<div class="a" style="left:982.0px;top:376.5px;width:38.0px;height:4.5px;background:#5C6370;"></div>
<div class="a" style="left:902.0px;top:390.8px;width:20.0px;height:3.5px;background:#3b4150;"></div>
<div class="a" style="left:902.0px;top:405.1px;width:20.0px;height:3.5px;background:#3b4150;"></div>
<div class="a" style="left:940.0px;top:405.1px;width:68.0px;height:4.5px;background:#9b66b0;"></div>
<div class="a" style="left:1015.0px;top:405.1px;width:65.0px;height:4.5px;background:#5a8fc0;"></div>
<div class="a" style="left:1087.0px;top:405.1px;width:45.0px;height:4.5px;background:#a8835e;"></div>
<div class="a" style="left:902.0px;top:419.4px;width:20.0px;height:3.5px;background:#3b4150;"></div>
<div class="a" style="left:982.0px;top:419.4px;width:79.0px;height:4.5px;background:#5C6370;"></div>
<div class="a" style="left:1068.0px;top:419.4px;width:29.0px;height:4.5px;background:#b3616a;"></div>
<div class="a" style="left:1104.0px;top:419.4px;width:28.0px;height:4.5px;background:#9b66b0;"></div>
<div class="a" style="left:902.0px;top:433.7px;width:20.0px;height:3.5px;background:#3b4150;"></div>
<div class="a" style="left:996.0px;top:433.7px;width:76.0px;height:4.5px;background:#8a909a;"></div>
<div class="a" style="left:1079.0px;top:433.7px;width:57.0px;height:4.5px;background:#b3616a;"></div>
<div class="a" style="left:1143.0px;top:433.7px;width:46.0px;height:4.5px;background:#8a909a;"></div>
<div class="a" style="left:902.0px;top:448.0px;width:20.0px;height:3.5px;background:#3b4150;"></div>
<div class="a" style="left:996.0px;top:448.0px;width:36.0px;height:4.5px;background:#a8835e;"></div>
<div class="a" style="left:1039.0px;top:448.0px;width:47.0px;height:4.5px;background:#5C6370;"></div>
<div class="a" style="left:1093.0px;top:448.0px;width:42.0px;height:4.5px;background:#9b66b0;"></div>
<div class="a" style="left:1142.0px;top:448.0px;width:43.0px;height:4.5px;background:#8a909a;"></div>
<div class="a" style="left:1192.0px;top:448.0px;width:37.0px;height:4.5px;background:#a8835e;"></div>
<div class="a" style="left:902.0px;top:462.3px;width:20.0px;height:3.5px;background:#3b4150;"></div>
<div class="a" style="left:902.0px;top:476.6px;width:20.0px;height:3.5px;background:#3b4150;"></div>
<div class="a" style="left:902.0px;top:490.9px;width:20.0px;height:3.5px;background:#3b4150;"></div>
<div class="a" style="left:982.0px;top:490.9px;width:16.0px;height:4.5px;background:#7d9c66;"></div>
<div class="a" style="left:902.0px;top:505.2px;width:20.0px;height:3.5px;background:#3b4150;"></div>
<div class="a" style="left:968.0px;top:505.2px;width:23.0px;height:4.5px;background:#a8835e;"></div>
<div class="a" style="left:902.0px;top:519.5px;width:20.0px;height:3.5px;background:#3b4150;"></div>
<div class="a" style="left:902.0px;top:533.8px;width:20.0px;height:3.5px;background:#3b4150;"></div>
<div class="a" style="left:968.0px;top:533.8px;width:73.0px;height:4.5px;background:#b3616a;"></div>
<div class="a" style="left:1048.0px;top:533.8px;width:38.0px;height:4.5px;background:#b3616a;"></div>
<div class="a" style="left:1093.0px;top:533.8px;width:55.0px;height:4.5px;background:#5a8fc0;"></div>
<div class="a" style="left:1155.0px;top:533.8px;width:29.0px;height:4.5px;background:#5C6370;"></div>
<div class="a" style="left:902.0px;top:548.1px;width:20.0px;height:3.5px;background:#3b4150;"></div>
<div class="a" style="left:940.0px;top:548.1px;width:39.0px;height:4.5px;background:#5a8fc0;"></div>
<div class="a" style="left:986.0px;top:548.1px;width:66.0px;height:4.5px;background:#a8835e;"></div>
<div class="a" style="left:1059.0px;top:548.1px;width:45.0px;height:4.5px;background:#5a8fc0;"></div>
<div class="a" style="left:1111.0px;top:548.1px;width:31.0px;height:4.5px;background:#b3616a;"></div>
<div class="a" style="left:902.0px;top:562.4px;width:20.0px;height:3.5px;background:#3b4150;"></div>
<div class="a" style="left:902.0px;top:576.7px;width:20.0px;height:3.5px;background:#3b4150;"></div>
<div class="a" style="left:996.0px;top:576.7px;width:49.0px;height:4.5px;background:#8a909a;"></div>
<div class="a" style="left:1052.0px;top:576.7px;width:35.0px;height:4.5px;background:#5a8fc0;"></div>
<div class="a" style="left:1094.0px;top:576.7px;width:59.0px;height:4.5px;background:#8a909a;"></div>
<div class="a" style="left:902.0px;top:591.0px;width:20.0px;height:3.5px;background:#3b4150;"></div>
<div class="a" style="left:902.0px;top:605.3px;width:20.0px;height:3.5px;background:#3b4150;"></div>
<div class="a" style="left:940.0px;top:605.3px;width:22.0px;height:4.5px;background:#5a8fc0;"></div>
<div class="a" style="left:969.0px;top:605.3px;width:74.0px;height:4.5px;background:#5C6370;"></div>
<div class="a" style="left:1050.0px;top:605.3px;width:71.0px;height:4.5px;background:#b3616a;"></div>
<div class="a" style="left:1128.0px;top:605.3px;width:13.0px;height:4.5px;background:#7d9c66;"></div>
<div class="a" style="left:1148.0px;top:605.3px;width:51.0px;height:4.5px;background:#9b66b0;"></div>
<div class="a" style="left:902.0px;top:619.6px;width:20.0px;height:3.5px;background:#3b4150;"></div>
<div class="a" style="left:996.0px;top:619.6px;width:50.0px;height:4.5px;background:#5a8fc0;"></div>
<div class="a" style="left:902.0px;top:633.9px;width:20.0px;height:3.5px;background:#3b4150;"></div>
<div class="a" style="left:968.0px;top:633.9px;width:30.0px;height:4.5px;background:#9b66b0;"></div>
<div class="a" style="left:1005.0px;top:633.9px;width:57.0px;height:4.5px;background:#a8835e;"></div>
<div class="a" style="left:1069.0px;top:633.9px;width:53.0px;height:4.5px;background:#b3616a;"></div>
<div class="a" style="left:902.0px;top:648.2px;width:20.0px;height:3.5px;background:#3b4150;"></div>
<div class="a" style="left:968.0px;top:648.2px;width:47.0px;height:4.5px;background:#5a8fc0;"></div>
<div class="a" style="left:1022.0px;top:648.2px;width:79.0px;height:4.5px;background:#5C6370;"></div>
<div class="a" style="left:1108.0px;top:648.2px;width:51.0px;height:4.5px;background:#5a8fc0;"></div>
<div class="a" style="left:1166.0px;top:648.2px;width:52.0px;height:4.5px;background:#9b66b0;"></div>
<div class="a" style="left:902.0px;top:662.5px;width:20.0px;height:3.5px;background:#3b4150;"></div>
<div class="a" style="left:996.0px;top:662.5px;width:22.0px;height:4.5px;background:#b3616a;"></div>
<div class="a" style="left:1025.0px;top:662.5px;width:58.0px;height:4.5px;background:#7d9c66;"></div>
<div class="a" style="left:902.0px;top:676.8px;width:20.0px;height:3.5px;background:#3b4150;"></div>
<div class="a" style="left:982.0px;top:676.8px;width:61.0px;height:4.5px;background:#5C6370;"></div>
<div class="a" style="left:1050.0px;top:676.8px;width:36.0px;height:4.5px;background:#a8835e;"></div>
<div class="a" style="left:1093.0px;top:676.8px;width:59.0px;height:4.5px;background:#5C6370;"></div>
<div class="a" style="left:1159.0px;top:676.8px;width:61.0px;height:4.5px;background:#8a909a;"></div>
<div class="a" style="left:1227.0px;top:676.8px;width:31.0px;height:4.5px;background:#5C6370;"></div>
<div class="a" style="left:902.0px;top:691.1px;width:20.0px;height:3.5px;background:#3b4150;"></div>
<div class="a" style="left:954.0px;top:691.1px;width:23.0px;height:4.5px;background:#5C6370;"></div>
<div class="a" style="left:984.0px;top:691.1px;width:70.0px;height:4.5px;background:#5C6370;"></div>
<div class="a" style="left:902.0px;top:705.4px;width:20.0px;height:3.5px;background:#3b4150;"></div>
<div class="a" style="left:940.0px;top:705.4px;width:78.0px;height:4.5px;background:#7d9c66;"></div>
<div class="a" style="left:1025.0px;top:705.4px;width:32.0px;height:4.5px;background:#8a909a;"></div>
<div class="a" style="left:902.0px;top:719.7px;width:20.0px;height:3.5px;background:#3b4150;"></div>
<div class="a" style="left:940.0px;top:719.7px;width:20.0px;height:4.5px;background:#8a909a;"></div>
<div class="a" style="left:967.0px;top:719.7px;width:51.0px;height:4.5px;background:#5C6370;"></div>
<div class="a" style="left:1025.0px;top:719.7px;width:22.0px;height:4.5px;background:#b3616a;"></div>
<div class="a" style="left:1054.0px;top:719.7px;width:22.0px;height:4.5px;background:#b3616a;"></div>
<div class="a" style="left:902.0px;top:734.0px;width:20.0px;height:3.5px;background:#3b4150;"></div>
<div class="a" style="left:968.0px;top:734.0px;width:15.0px;height:4.5px;background:#a8835e;"></div>
<div class="a" style="left:902.0px;top:748.3px;width:20.0px;height:3.5px;background:#3b4150;"></div>
<div class="a" style="left:940.0px;top:748.3px;width:43.0px;height:4.5px;background:#a8835e;"></div>
<div class="a" style="left:990.0px;top:748.3px;width:40.0px;height:4.5px;background:#5a8fc0;"></div>
<div class="a" style="left:1037.0px;top:748.3px;width:78.0px;height:4.5px;background:#b3616a;"></div>
<div class="a" style="left:1122.0px;top:748.3px;width:70.0px;height:4.5px;background:#5a8fc0;"></div></div></div>
<div class="a" style="left:46px;top:750px;width:207px;height:117.3px;background:#C6C6C6"></div><div class="a" style="left:47px;top:751px;width:205px;height:115.3px;overflow:hidden;background:#fff"><div class="th"><div class="st" style="left:10px;top:17px;font-size:69px;font-weight:bold;color:#2E75B6;letter-spacing:0.2px">Auto Testing</div><div class="a" style="left:0.0px;top:113.0px;width:1333.0px;height:6.0px;background:#0070C0;"></div>
<div class="a" style="left:17.0px;top:125.0px;width:802.0px;height:96.0px;background:transparent;border:5px solid #000;"></div>
<div class="a" style="left:904.0px;top:125.0px;width:371.0px;height:96.0px;background:transparent;border:5px solid #000;"></div>
<div class="a" style="left:17.0px;top:247.0px;width:194.0px;height:366.0px;background:transparent;border:5px solid #000;"></div>
<div class="st" style="left:28.0px;top:143.0px;font-size:25px;color:#000;">1) Parameter legality check</div>
<div class="st" style="left:328.0px;top:143.0px;font-size:25px;color:#000;">1.1) <b>Number</b> of parameters</div>
<div class="st" style="left:328.0px;top:187.0px;font-size:25px;color:#000;">1.2) Determine whether it is a <b>prime number</b></div>
<div class="st" style="left:914.0px;top:143.0px;font-size:25px;color:#000;">2) <b>Generate data</b> by “gendata.sh”</div>
<div class="st" style="left:914.0px;top:188.0px;font-size:25px;color:#000;">3) <b>Compile</b> Source Code</div>
<div class="st" style="left:27.0px;top:276.0px;font-size:25px;color:#000;">4) Test</div>
<div class="st" style="left:40.0px;top:336.0px;font-size:25px;color:#000;">4.1) Write</div>
<div class="st" style="left:40.0px;top:396.0px;font-size:25px;color:#000;">4.2) Read</div>
<div class="st" style="left:40.0px;top:456.0px;font-size:25px;color:#000;">4.3) Repair</div>
<div class="st" style="left:40.0px;top:516.0px;font-size:25px;color:#000;">4.4) Diff</div>
<div class="st" style="left:27.0px;top:576.0px;font-size:25px;color:#000;">5) Calculate time</div>
<div class="st" style="left:349.0px;top:260.0px;font-size:25px;color:#000;">Compare</div>
<div class="st" style="left:350.0px;top:339.0px;font-size:25px;color:#000;">Disk 0</div>
<div class="st" style="left:350.0px;top:388.0px;font-size:25px;color:#000;">Disk 1</div>
<div class="st" style="left:350.0px;top:443.0px;font-size:25px;color:#000;">Disk 2</div>
<div class="st" style="left:350.0px;top:492.0px;font-size:25px;color:#000;">Disk 3</div>
<div class="st" style="left:350.0px;top:543.0px;font-size:25px;color:#000;">Disk 4</div>
<div class="st" style="left:350.0px;top:592.0px;font-size:25px;color:#000;">Disk 5</div>
<div class="st" style="left:350.0px;top:643.0px;font-size:25px;color:#000;">Disk 6</div>
<div class="st" style="left:341.0px;top:716.0px;font-size:25px;color:#000;">./test.sh &lt;M1&gt; &lt;M2&gt;</div>
<div class="st" style="left:744.0px;top:717.0px;font-size:25px;color:#000;">M1=7</div>
<div class="st" style="left:937.0px;top:717.0px;font-size:25px;color:#000;">M2=3</div>
<svg width="44" height="33" viewBox="0 0 44 33" style="left:458px;top:256px"><path d="M0,2 Q0,0 2,0 L13.2,0.3 L20.2,5.1 L37.5,5.1 Q39.4,5.3 39.4,7.7 L39.4,10 L10.6,10 Q8,10.3 7.2,13 L0.2,30 Z" fill="#000"/><path d="M9,14.1 Q9.8,12.5 11,12.5 L41.9,12.5 Q44.3,13 44,14.8 L35.6,32.7 L2.1,32.7 Z" fill="#000"/></svg>
<svg width="44" height="33" viewBox="0 0 44 33" style="left:458px;top:336px"><path d="M0,2 Q0,0 2,0 L13.2,0.3 L20.2,5.1 L37.5,5.1 Q39.4,5.3 39.4,7.7 L39.4,10 L10.6,10 Q8,10.3 7.2,13 L0.2,30 Z" fill="#000"/><path d="M9,14.1 Q9.8,12.5 11,12.5 L41.9,12.5 Q44.3,13 44,14.8 L35.6,32.7 L2.1,32.7 Z" fill="#000"/></svg>
<svg width="44" height="33" viewBox="0 0 44 33" style="left:458px;top:392.6px"><path d="M0,2 Q0,0 2,0 L13.2,0.3 L20.2,5.1 L37.5,5.1 Q39.4,5.3 39.4,7.7 L39.4,10 L10.6,10 Q8,10.3 7.2,13 L0.2,30 Z" fill="#000"/><path d="M9,14.1 Q9.8,12.5 11,12.5 L41.9,12.5 Q44.3,13 44,14.8 L35.6,32.7 L2.1,32.7 Z" fill="#000"/></svg>
<svg width="44" height="33" viewBox="0 0 44 33" style="left:458px;top:438.70000000000005px"><path d="M0,2 Q0,0 2,0 L13.2,0.3 L20.2,5.1 L37.5,5.1 Q39.4,5.3 39.4,7.7 L39.4,10 L10.6,10 Q8,10.3 7.2,13 L0.2,30 Z" fill="#000"/><path d="M9,14.1 Q9.8,12.5 11,12.5 L41.9,12.5 Q44.3,13 44,14.8 L35.6,32.7 L2.1,32.7 Z" fill="#000"/></svg>
<svg width="44" height="33" viewBox="0 0 44 33" style="left:458px;top:488.4px"><path d="M0,2 Q0,0 2,0 L13.2,0.3 L20.2,5.1 L37.5,5.1 Q39.4,5.3 39.4,7.7 L39.4,10 L10.6,10 Q8,10.3 7.2,13 L0.2,30 Z" fill="#000"/><path d="M9,14.1 Q9.8,12.5 11,12.5 L41.9,12.5 Q44.3,13 44,14.8 L35.6,32.7 L2.1,32.7 Z" fill="#000"/></svg>
<svg width="44" height="33" viewBox="0 0 44 33" style="left:458px;top:540.2px"><path d="M0,2 Q0,0 2,0 L13.2,0.3 L20.2,5.1 L37.5,5.1 Q39.4,5.3 39.4,7.7 L39.4,10 L10.6,10 Q8,10.3 7.2,13 L0.2,30 Z" fill="#000"/><path d="M9,14.1 Q9.8,12.5 11,12.5 L41.9,12.5 Q44.3,13 44,14.8 L35.6,32.7 L2.1,32.7 Z" fill="#000"/></svg>
<svg width="44" height="33" viewBox="0 0 44 33" style="left:458px;top:587.3px"><path d="M0,2 Q0,0 2,0 L13.2,0.3 L20.2,5.1 L37.5,5.1 Q39.4,5.3 39.4,7.7 L39.4,10 L10.6,10 Q8,10.3 7.2,13 L0.2,30 Z" fill="#000"/><path d="M9,14.1 Q9.8,12.5 11,12.5 L41.9,12.5 Q44.3,13 44,14.8 L35.6,32.7 L2.1,32.7 Z" fill="#000"/></svg>
<svg width="44" height="33" viewBox="0 0 44 33" style="left:458px;top:641px"><path d="M0,2 Q0,0 2,0 L13.2,0.3 L20.2,5.1 L37.5,5.1 Q39.4,5.3 39.4,7.7 L39.4,10 L10.6,10 Q8,10.3 7.2,13 L0.2,30 Z" fill="#000"/><path d="M9,14.1 Q9.8,12.5 11,12.5 L41.9,12.5 Q44.3,13 44,14.8 L35.6,32.7 L2.1,32.7 Z" fill="#000"/></svg>
<svg width="1333" height="750" style="left:0;top:0"><line x1="532" y1="274" x2="616" y2="274" stroke="#4472C4" stroke-width="5"/><polygon points="608,263 626,274 608,285" fill="#4472C4"/><path d="M583.5,332.5 C570,333 557,334 557,338.5 L557,492 C557,495 545,496.5 531.5,496.5 C545,496.5 557,498 557,501 L557,671 C557,675 570,676.2 583.5,676.2" fill="none" stroke="#4472C4" stroke-width="6.5"/></svg>
<div class="a" style="left:678.0px;top:257.0px;width:192.0px;height:41.0px;background:#A9D18E;border:5px solid #000;"></div><div class="cell" style="left:678.0px;top:264.5px;width:192.0px">Diff x</div>
<div class="a" style="left:869.0px;top:257.0px;width:192.0px;height:41.0px;background:#A9D18E;border:5px solid #000;"></div><div class="cell" style="left:869.0px;top:264.5px;width:192.0px">Diff x '</div>
<div class="a" style="left:678.0px;top:328.0px;width:192.0px;height:41.0px;background:#4472C4;border:5px solid #2F528F;"></div><div class="cell" style="left:678.0px;top:335.5px;width:192.0px">Data0</div>
<div class="a" style="left:869.0px;top:328.0px;width:195.0px;height:41.0px;background:#4472C4;border:5px solid #2F528F;"></div><div class="cell" style="left:869.0px;top:335.5px;width:195.0px">Data0 '</div>
<div class="a" style="left:678.0px;top:383.0px;width:192.0px;height:41.0px;background:#4472C4;border:5px solid #2F528F;"></div><div class="cell" style="left:678.0px;top:390.5px;width:192.0px">Data1</div>
<div class="a" style="left:869.0px;top:383.0px;width:195.0px;height:41.0px;background:#4472C4;border:5px solid #2F528F;"></div><div class="cell" style="left:869.0px;top:390.5px;width:195.0px">Data1 '</div>
<div class="a" style="left:678.0px;top:438.0px;width:192.0px;height:41.0px;background:#4472C4;border:5px solid #2F528F;"></div><div class="cell" style="left:678.0px;top:445.5px;width:192.0px">Data2</div>
<div class="a" style="left:869.0px;top:438.0px;width:195.0px;height:41.0px;background:#4472C4;border:5px solid #2F528F;"></div><div class="cell" style="left:869.0px;top:445.5px;width:195.0px">Data2 '</div>
<div class="a" style="left:678.0px;top:486.0px;width:192.0px;height:41.0px;background:#4472C4;border:5px solid #2F528F;"></div><div class="cell" style="left:678.0px;top:493.5px;width:192.0px">Data3</div>
<div class="a" style="left:869.0px;top:486.0px;width:195.0px;height:41.0px;background:#FFC000;border:5px solid #2F528F;"></div><div class="cell" style="left:869.0px;top:493.5px;width:195.0px">Horizon '</div>
<div class="a" style="left:678.0px;top:534.0px;width:192.0px;height:41.0px;background:#4472C4;border:5px solid #2F528F;"></div><div class="cell" style="left:678.0px;top:541.5px;width:192.0px">Data4</div>
<div class="a" style="left:869.0px;top:534.0px;width:195.0px;height:41.0px;background:#FF0000;border:5px solid #2F528F;"></div><div class="cell" style="left:869.0px;top:541.5px;width:195.0px">Diagonal '</div>
<div class="a" style="left:678.0px;top:584.0px;width:194.0px;height:41.0px;background:#FFC000;border:5px solid #2F528F;"></div><div class="cell" style="left:678.0px;top:591.5px;width:194.0px">Horizon</div>
<div class="a" style="left:678.0px;top:634.0px;width:194.0px;height:41.0px;background:#FF0000;border:5px solid #2F528F;"></div><div class="cell" style="left:678.0px;top:641.5px;width:194.0px">Diagonal</div>
<svg width="38" height="40" viewBox="0 0 38 40" style="left:1089.8px;top:437px"><polygon points="9.9,0.5 18.8,11 27.7,0.5 37.4,9.2 26.4,20.1 37.4,31.1 27.7,39.5 18.8,28.8 9.9,39.5 0.3,31.1 11.1,20.1 0.3,9.2" fill="#FF0000" stroke="#2F528F" stroke-width="6.5"/></svg>
<svg width="38" height="40" viewBox="0 0 38 40" style="left:1090.5px;top:488px"><polygon points="9.9,0.5 18.8,11 27.7,0.5 37.4,9.2 26.4,20.1 37.4,31.1 27.7,39.5 18.8,28.8 9.9,39.5 0.3,31.1 11.1,20.1 0.3,9.2" fill="#FF0000" stroke="#2F528F" stroke-width="6.5"/></svg>
<svg width="38" height="40" viewBox="0 0 38 40" style="left:1090.5px;top:538px"><polygon points="9.9,0.5 18.8,11 27.7,0.5 37.4,9.2 26.4,20.1 37.4,31.1 27.7,39.5 18.8,28.8 9.9,39.5 0.3,31.1 11.1,20.1 0.3,9.2" fill="#FF0000" stroke="#2F528F" stroke-width="6.5"/></svg></div></div>
<div class="a" style="left:43px;top:889px;width:212px;height:123px;background:#B7472A;"></div>
<div class="a" style="left:46px;top:892px;width:207px;height:117.3px;background:#fff"></div><div class="a" style="left:47px;top:893px;width:205px;height:115.3px;overflow:hidden;background:#fff"><div class="th"><div class="st" style="left:10px;top:17px;font-size:69px;font-weight:bold;color:#2E75B6;letter-spacing:0.2px">Auto Testing</div><div class="a" style="left:0.0px;top:113.0px;width:1333.0px;height:6.0px;background:#0070C0;"></div>
<div class="a" style="left:17.0px;top:125.0px;width:802.0px;height:96.0px;background:transparent;border:5px solid #000;"></div>
<div class="a" style="left:904.0px;top:125.0px;width:371.0px;height:96.0px;background:transparent;border:5px solid #000;"></div>
<div class="a" style="left:17.0px;top:247.0px;width:194.0px;height:366.0px;background:transparent;border:5px solid #000;"></div>
<div class="st" style="left:28.0px;top:143.0px;font-size:25px;color:#000;">1) Parameter legality check</div>
<div class="st" style="left:328.0px;top:143.0px;font-size:25px;color:#000;">1.1) <b>Number</b> of parameters</div>
<div class="st" style="left:328.0px;top:187.0px;font-size:25px;color:#000;">1.2) Determine whether it is a <b>prime number</b></div>
<div class="st" style="left:914.0px;top:143.0px;font-size:25px;color:#000;">2) <b>Generate data</b> by “gendata.sh”</div>
<div class="st" style="left:914.0px;top:188.0px;font-size:25px;color:#000;">3) <b>Compile</b> Source Code</div>
<div class="st" style="left:27.0px;top:276.0px;font-size:25px;color:#000;">4) Test</div>
<div class="st" style="left:40.0px;top:336.0px;font-size:25px;color:#000;">4.1) Write</div>
<div class="st" style="left:40.0px;top:396.0px;font-size:25px;color:#000;">4.2) Read</div>
<div class="st" style="left:40.0px;top:456.0px;font-size:25px;color:#000;">4.3) Repair</div>
<div class="st" style="left:40.0px;top:516.0px;font-size:25px;color:#000;">4.4) Diff</div>
<div class="st" style="left:27.0px;top:576.0px;font-size:25px;color:#000;">5) Calculate time</div>
<div class="st" style="left:349.0px;top:260.0px;font-size:25px;color:#000;">Compare</div>
<div class="st" style="left:350.0px;top:339.0px;font-size:25px;color:#000;">Disk 0</div>
<div class="st" style="left:350.0px;top:388.0px;font-size:25px;color:#000;">Disk 1</div>
<div class="st" style="left:350.0px;top:443.0px;font-size:25px;color:#000;">Disk 2</div>
<div class="st" style="left:350.0px;top:492.0px;font-size:25px;color:#000;">Disk 3</div>
<div class="st" style="left:350.0px;top:543.0px;font-size:25px;color:#000;">Disk 4</div>
<div class="st" style="left:350.0px;top:592.0px;font-size:25px;color:#000;">Disk 5</div>
<div class="st" style="left:350.0px;top:643.0px;font-size:25px;color:#000;">Disk 6</div>
<div class="st" style="left:341.0px;top:716.0px;font-size:25px;color:#000;">./test.sh &lt;M1&gt; &lt;M2&gt;</div>
<div class="st" style="left:744.0px;top:717.0px;font-size:25px;color:#000;">M1=7</div>
<div class="st" style="left:937.0px;top:717.0px;font-size:25px;color:#000;">M2=3</div>
<svg width="44" height="33" viewBox="0 0 44 33" style="left:458px;top:256px"><path d="M0,2 Q0,0 2,0 L13.2,0.3 L20.2,5.1 L37.5,5.1 Q39.4,5.3 39.4,7.7 L39.4,10 L10.6,10 Q8,10.3 7.2,13 L0.2,30 Z" fill="#000"/><path d="M9,14.1 Q9.8,12.5 11,12.5 L41.9,12.5 Q44.3,13 44,14.8 L35.6,32.7 L2.1,32.7 Z" fill="#000"/></svg>
<svg width="44" height="33" viewBox="0 0 44 33" style="left:458px;top:336px"><path d="M0,2 Q0,0 2,0 L13.2,0.3 L20.2,5.1 L37.5,5.1 Q39.4,5.3 39.4,7.7 L39.4,10 L10.6,10 Q8,10.3 7.2,13 L0.2,30 Z" fill="#000"/><path d="M9,14.1 Q9.8,12.5 11,12.5 L41.9,12.5 Q44.3,13 44,14.8 L35.6,32.7 L2.1,32.7 Z" fill="#000"/></svg>
<svg width="44" height="33" viewBox="0 0 44 33" style="left:458px;top:392.6px"><path d="M0,2 Q0,0 2,0 L13.2,0.3 L20.2,5.1 L37.5,5.1 Q39.4,5.3 39.4,7.7 L39.4,10 L10.6,10 Q8,10.3 7.2,13 L0.2,30 Z" fill="#000"/><path d="M9,14.1 Q9.8,12.5 11,12.5 L41.9,12.5 Q44.3,13 44,14.8 L35.6,32.7 L2.1,32.7 Z" fill="#000"/></svg>
<svg width="44" height="33" viewBox="0 0 44 33" style="left:458px;top:438.70000000000005px"><path d="M0,2 Q0,0 2,0 L13.2,0.3 L20.2,5.1 L37.5,5.1 Q39.4,5.3 39.4,7.7 L39.4,10 L10.6,10 Q8,10.3 7.2,13 L0.2,30 Z" fill="#000"/><path d="M9,14.1 Q9.8,12.5 11,12.5 L41.9,12.5 Q44.3,13 44,14.8 L35.6,32.7 L2.1,32.7 Z" fill="#000"/></svg>
<svg width="44" height="33" viewBox="0 0 44 33" style="left:458px;top:488.4px"><path d="M0,2 Q0,0 2,0 L13.2,0.3 L20.2,5.1 L37.5,5.1 Q39.4,5.3 39.4,7.7 L39.4,10 L10.6,10 Q8,10.3 7.2,13 L0.2,30 Z" fill="#000"/><path d="M9,14.1 Q9.8,12.5 11,12.5 L41.9,12.5 Q44.3,13 44,14.8 L35.6,32.7 L2.1,32.7 Z" fill="#000"/></svg>
<svg width="44" height="33" viewBox="0 0 44 33" style="left:458px;top:540.2px"><path d="M0,2 Q0,0 2,0 L13.2,0.3 L20.2,5.1 L37.5,5.1 Q39.4,5.3 39.4,7.7 L39.4,10 L10.6,10 Q8,10.3 7.2,13 L0.2,30 Z" fill="#000"/><path d="M9,14.1 Q9.8,12.5 11,12.5 L41.9,12.5 Q44.3,13 44,14.8 L35.6,32.7 L2.1,32.7 Z" fill="#000"/></svg>
<svg width="44" height="33" viewBox="0 0 44 33" style="left:458px;top:587.3px"><path d="M0,2 Q0,0 2,0 L13.2,0.3 L20.2,5.1 L37.5,5.1 Q39.4,5.3 39.4,7.7 L39.4,10 L10.6,10 Q8,10.3 7.2,13 L0.2,30 Z" fill="#000"/><path d="M9,14.1 Q9.8,12.5 11,12.5 L41.9,12.5 Q44.3,13 44,14.8 L35.6,32.7 L2.1,32.7 Z" fill="#000"/></svg>
<svg width="44" height="33" viewBox="0 0 44 33" style="left:458px;top:641px"><path d="M0,2 Q0,0 2,0 L13.2,0.3 L20.2,5.1 L37.5,5.1 Q39.4,5.3 39.4,7.7 L39.4,10 L10.6,10 Q8,10.3 7.2,13 L0.2,30 Z" fill="#000"/><path d="M9,14.1 Q9.8,12.5 11,12.5 L41.9,12.5 Q44.3,13 44,14.8 L35.6,32.7 L2.1,32.7 Z" fill="#000"/></svg>
<svg width="1333" height="750" style="left:0;top:0"><path d="M583,235.3 C569,235.8 556,237 556,241.5 L556,268 C556,271 544,272.5 529.5,272.5 C544,272.5 556,274 556,277 L556,308 C556,312 569,313.29999999999995 583,313.29999999999995" fill="none" stroke="#4472C4" stroke-width="6.5"/><path d="M583.5,332.5 C570,333 557,334 557,338.5 L557,492 C557,495 545,496.5 531.5,496.5 C545,496.5 557,498 557,501 L557,671 C557,675 570,676.2 583.5,676.2" fill="none" stroke="#4472C4" stroke-width="6.5"/></svg>
<div class="a" style="left:678.0px;top:234.0px;width:192.0px;height:41.0px;background:#A9D18E;border:5px solid #000;"></div><div class="cell" style="left:678.0px;top:241.5px;width:192.0px">Diff x</div>
<div class="a" style="left:869.0px;top:234.0px;width:192.0px;height:42.0px;background:#A9D18E;border:5px solid #000;"></div><div class="cell" style="left:869.0px;top:241.5px;width:192.0px">Diff x '</div>
<div class="a" style="left:678.0px;top:274.0px;width:192.0px;height:42.0px;background:#A9D18E;border:5px solid #000;"></div><div class="cell" style="left:678.0px;top:281.5px;width:192.0px">Diff y</div>
<div class="a" style="left:869.0px;top:274.0px;width:192.0px;height:42.0px;background:#A9D18E;border:5px solid #000;"></div><div class="cell" style="left:869.0px;top:281.5px;width:192.0px">Diff y '</div>
<div class="a" style="left:678.0px;top:328.0px;width:192.0px;height:41.0px;background:#4472C4;border:5px solid #2F528F;"></div><div class="cell" style="left:678.0px;top:335.5px;width:192.0px">Data0</div>
<div class="a" style="left:869.0px;top:328.0px;width:195.0px;height:41.0px;background:#4472C4;border:5px solid #2F528F;"></div><div class="cell" style="left:869.0px;top:335.5px;width:195.0px">Data0 '</div>
<div class="a" style="left:678.0px;top:383.0px;width:192.0px;height:41.0px;background:#4472C4;border:5px solid #2F528F;"></div><div class="cell" style="left:678.0px;top:390.5px;width:192.0px">Data1</div>
<div class="a" style="left:869.0px;top:383.0px;width:195.0px;height:41.0px;background:#4472C4;border:5px solid #2F528F;"></div><div class="cell" style="left:869.0px;top:390.5px;width:195.0px">Data1 '</div>
<div class="a" style="left:678.0px;top:438.0px;width:192.0px;height:41.0px;background:#4472C4;border:5px solid #2F528F;"></div><div class="cell" style="left:678.0px;top:445.5px;width:192.0px">Data2</div>
<div class="a" style="left:869.0px;top:438.0px;width:195.0px;height:41.0px;background:#4472C4;border:5px solid #2F528F;"></div><div class="cell" style="left:869.0px;top:445.5px;width:195.0px">Data2 '</div>
<div class="a" style="left:678.0px;top:486.0px;width:192.0px;height:41.0px;background:#4472C4;border:5px solid #2F528F;"></div><div class="cell" style="left:678.0px;top:493.5px;width:192.0px">Data3</div>
<div class="a" style="left:869.0px;top:486.0px;width:195.0px;height:41.0px;background:#FFC000;border:5px solid #2F528F;"></div><div class="cell" style="left:869.0px;top:493.5px;width:195.0px">Horizon '</div>
<div class="a" style="left:678.0px;top:534.0px;width:192.0px;height:41.0px;background:#4472C4;border:5px solid #2F528F;"></div><div class="cell" style="left:678.0px;top:541.5px;width:192.0px">Data4</div>
<div class="a" style="left:869.0px;top:534.0px;width:195.0px;height:41.0px;background:#FF0000;border:5px solid #2F528F;"></div><div class="cell" style="left:869.0px;top:541.5px;width:195.0px">Diagonal '</div>
<div class="a" style="left:678.0px;top:584.0px;width:194.0px;height:41.0px;background:#FFC000;border:5px solid #2F528F;"></div><div class="cell" style="left:678.0px;top:591.5px;width:194.0px">Horizon</div>
<div class="a" style="left:678.0px;top:634.0px;width:194.0px;height:41.0px;background:#FF0000;border:5px solid #2F528F;"></div><div class="cell" style="left:678.0px;top:641.5px;width:194.0px">Diagonal</div>
<svg width="38" height="40" viewBox="0 0 38 40" style="left:1088.5px;top:381.29999999999995px"><polygon points="9.9,0.5 18.8,11 27.7,0.5 37.4,9.2 26.4,20.1 37.4,31.1 27.7,39.5 18.8,28.8 9.9,39.5 0.3,31.1 11.1,20.1 0.3,9.2" fill="#FF0000" stroke="#2F528F" stroke-width="6.5"/></svg>
<svg width="38" height="40" viewBox="0 0 38 40" style="left:1089.8px;top:437px"><polygon points="9.9,0.5 18.8,11 27.7,0.5 37.4,9.2 26.4,20.1 37.4,31.1 27.7,39.5 18.8,28.8 9.9,39.5 0.3,31.1 11.1,20.1 0.3,9.2" fill="#FF0000" stroke="#2F528F" stroke-width="6.5"/></svg>
<svg width="38" height="40" viewBox="0 0 38 40" style="left:1090.5px;top:488px"><polygon points="9.9,0.5 18.8,11 27.7,0.5 37.4,9.2 26.4,20.1 37.4,31.1 27.7,39.5 18.8,28.8 9.9,39.5 0.3,31.1 11.1,20.1 0.3,9.2" fill="#FF0000" stroke="#2F528F" stroke-width="6.5"/></svg>
<svg width="38" height="40" viewBox="0 0 38 40" style="left:1090.5px;top:538px"><polygon points="9.9,0.5 18.8,11 27.7,0.5 37.4,9.2 26.4,20.1 37.4,31.1 27.7,39.5 18.8,28.8 9.9,39.5 0.3,31.1 11.1,20.1 0.3,9.2" fill="#FF0000" stroke="#2F528F" stroke-width="6.5"/></svg></div></div>
<div class="a" style="left:46px;top:1033px;width:207px;height:40px;background:#C6C6C6"></div><div class="a" style="left:47px;top:1034px;width:205px;height:40px;background:#fff"></div></div></div>
<div class="t" style="left:15.5px;top:321.0px;font-size:19px;color:#444;">4</div>
<div class="t" style="left:15.5px;top:463.0px;font-size:19px;color:#444;">5</div>
<div class="t" style="left:15.5px;top:605.0px;font-size:19px;color:#444;">6</div>
<div class="t" style="left:15.5px;top:747.0px;font-size:19px;color:#444;">7</div>
<div class="t" style="left:15.5px;top:889.0px;font-size:19px;color:#C43E1C;">8</div>
<div class="t" style="left:15.5px;top:1031.0px;font-size:19px;color:#444;">9</div>
<svg width="14" height="12" style="left:14px;top:201.5px"><polygon points="8,0 10,4 14,4.5 11,7.5 12,11.5 8,9.5 4,11.5 5,7.5 2,4.5 6,4" fill="#505050"/><path d="M0,3 h2 M1,6 h1.5 M0,9 h2" stroke="#505050" stroke-width="1"/></svg>
<svg width="14" height="12" style="left:14px;top:484.5px"><polygon points="8,0 10,4 14,4.5 11,7.5 12,11.5 8,9.5 4,11.5 5,7.5 2,4.5 6,4" fill="#505050"/><path d="M0,3 h2 M1,6 h1.5 M0,9 h2" stroke="#505050" stroke-width="1"/></svg>
<svg width="14" height="12" style="left:14px;top:769.5px"><polygon points="8,0 10,4 14,4.5 11,7.5 12,11.5 8,9.5 4,11.5 5,7.5 2,4.5 6,4" fill="#505050"/><path d="M0,3 h2 M1,6 h1.5 M0,9 h2" stroke="#505050" stroke-width="1"/></svg>
<svg width="14" height="12" style="left:14px;top:911.5px"><polygon points="8,0 10,4 14,4.5 11,7.5 12,11.5 8,9.5 4,11.5 5,7.5 2,4.5 6,4" fill="#505050"/><path d="M0,3 h2 M1,6 h1.5 M0,9 h2" stroke="#505050" stroke-width="1"/></svg>
<div class="a" style="left:279px;top:218px;width:19px;height:814px;background:#F2F2F2;"></div>
<div class="a" style="left:279px;top:200px;width:19px;height:19px;background:#fff;border:1px solid #ABABAB"></div>
<svg width="10" height="6" style="left:283.5px;top:206px"><polygon points="0,5.5 10,5.5 5,0" fill="#222"/></svg>
<div class="a" style="left:279px;top:420px;width:19px;height:527px;background:#fff;border:1px solid #ABABAB"></div>
<div class="a" style="left:279px;top:1031px;width:19px;height:18px;background:#fff;border:1px solid #ABABAB"></div>
<svg width="10" height="6" style="left:283.5px;top:1038px"><polygon points="0,0 10,0 5,5.5" fill="#222"/></svg>
<div class="a" style="left:302px;top:198px;width:1px;height:854px;background:#D2D2D2;"></div>
<div class="a" style="left:1900px;top:218px;width:19px;height:678px;background:#F2F2F2;"></div>
<div class="a" style="left:1900px;top:200px;width:19px;height:18px;background:#fff;border:1px solid #ABABAB"></div>
<svg width="10" height="6" style="left:1904.5px;top:206px"><polygon points="0,5.5 10,5.5 5,0" fill="#222"/></svg>
<div class="a" style="left:1900px;top:709.5px;width:19px;height:66px;background:#fff;border:1px solid #ABABAB"></div>
<div class="a" style="left:1900px;top:895.5px;width:19px;height:18.5px;background:#fff;border:1px solid #ABABAB"></div>
<svg width="10" height="6" style="left:1904.5px;top:902px"><polygon points="0,0 10,0 5,5.5" fill="#222"/></svg>
<svg width="16" height="40" style="left:1902px;top:918px"><g fill="#555"><polygon points="7.5,1 14,8 1,8"/><polygon points="7.5,6.5 14,13.5 1,13.5"/><polygon points="1,23 14,23 7.5,30"/><polygon points="1,28.5 14,28.5 7.5,35.5"/></g></svg>
<div class="a" style="left:305px;top:982px;width:1615px;height:1px;background:#C3C3C3;"></div>
<div class="t" style="left:317px;top:993px;font-size:18px;color:#595959;">单击此处添加备注</div>
<div class="a" style="left:0px;top:1052px;width:1920px;height:28px;background:#F3F3F3;"></div>
<div class="t" style="left:10.5px;top:1059.5px;font-size:14px;color:#444;">幻灯片</div>
<div class="t" style="left:59.5px;top:1059.5px;font-size:14px;color:#444;">第</div>
<div class="t" style="left:78px;top:1059.5px;font-size:14px;color:#444;">8</div>
<div class="t" style="left:86px;top:1059.5px;font-size:14px;color:#444;">张，</div>
<div class="t" style="left:120.5px;top:1059.5px;font-size:14px;color:#444;">共</div>
<div class="t" style="left:140px;top:1059.5px;font-size:14px;color:#444;">9</div>
<div class="t" style="left:153.5px;top:1059.5px;font-size:14px;color:#444;">张</div>
<svg width="20" height="16" style="left:191px;top:1058px"><path d="M1,1.5 h7 l1.5,1.5 l1.5,-1.5 h6 v11 h-6 l-1.5,1.5 l-1.5,-1.5 h-7 z M9.5,3 v11" fill="none" stroke="#666" stroke-width="1"/><path d="M11,10 l5,-5 l1.5,1.5 l-5,5 z" fill="none" stroke="#666" stroke-width="0.9"/></svg>
<div class="t" style="left:231px;top:1059.5px;font-size:14px;color:#444;letter-spacing:0.6px">中文(中国)</div>
<svg width="20" height="18" style="left:321px;top:1057px"><path d="M6,3 a6.5,6.5 0 1 0 8,1" fill="none" stroke="#555" stroke-width="1.3" stroke-dasharray="2.5,1.5"/><path d="M10,10 l7,7 M17,10 l-7,7" stroke="#444" stroke-width="1.6"/></svg>
<div class="t" style="left:344px;top:1059.5px;font-size:14px;color:#444;">辅助功能:</div>
<div class="t" style="left:412.5px;top:1059.5px;font-size:14px;color:#444;">调查</div>
<svg width="16" height="16" style="left:1318px;top:1058px"><path d="M1,8.5 h13 M1,11.5 h13 M1,14.5 h13 M4,5.5 l3.5,-4 l3.5,4" fill="none" stroke="#555" stroke-width="1.1"/></svg>
<div class="t" style="left:1339px;top:1059px;font-size:15px;color:#333;">备注</div>
<svg width="20" height="18" style="left:1393px;top:1057px"><path d="M2,1 h16 a1,1 0 0 1 1,1 v9.5 a1,1 0 0 1 -1,1 h-9 l-4,4 v-4 h-3 a1,1 0 0 1 -1,-1 v-9.5 a1,1 0 0 1 1,-1 z" fill="#505050"/></svg>
<div class="t" style="left:1414.5px;top:1059px;font-size:15px;color:#333;">批注</div>
<div class="a" style="left:1469px;top:1052px;width:50px;height:28px;background:#C6C6C6;"></div>
<svg width="200" height="20" style="left:1480px;top:1057px"><g fill="none" stroke="#666" stroke-width="1.1"><rect x="5" y="1.5" width="17" height="16"/><path d="M8.5,1.5 v16 M11,4 h8 v5 h-8 z"/><rect x="55.5" y="2" width="6.5" height="5.5"/><rect x="64.5" y="2" width="6.5" height="5.5"/><rect x="55.5" y="11" width="6.5" height="5.5"/><rect x="64.5" y="11" width="6.5" height="5.5"/><path d="M105,3 h7 l1.5,1.5 l1.5,-1.5 h7 v13 h-7 l-1.5,1.5 l-1.5,-1.5 h-7 z M113.5,4.5 v13 M107,6.5 h4.5 M107,9 h4.5 M107,11.5 h4.5 M116,6.5 h4.5 M116,9 h4.5 M116,11.5 h4.5"/><path d="M155,2.5 h17 M157,3 v8 h13 v-8 M163.5,11 v5.5 M159.5,17 h8"/></g></svg>
<div class="a" style="left:1676px;top:1065.5px;width:10px;height:1px;background:#555;"></div>
<div class="a" style="left:1692px;top:1065.5px;width:125px;height:1px;background:#777;"></div>
<div class="a" style="left:1741px;top:1058.5px;width:6.5px;height:15px;background:#555;"></div>
<div class="a" style="left:1754.5px;top:1062px;width:1px;height:8px;background:#777;"></div>
<div class="a" style="left:1822.5px;top:1065.5px;width:10px;height:1px;background:#555;"></div>
<div class="a" style="left:1827px;top:1061px;width:1px;height:10px;background:#555;"></div>
<div class="t" style="left:1848px;top:1058px;font-size:15px;color:#333;">84%</div>
<svg width="16" height="16" style="left:1896px;top:1058px"><rect x="1.5" y="1.5" width="13" height="13" fill="none" stroke="#777" stroke-width="1"/><path d="M4,4 l3,3 M12,4 l-3,3 M4,12 l3,-3 M12,12 l-3,-3" stroke="#777" stroke-width="1"/></svg>
<div class="a" style="left:435px;top:218px;width:1335px;height:752px;background:#BFBFBF;"></div>
<div class="sl" style="left:436px;top:219px"><div class="st" style="left:10px;top:17px;font-size:69px;font-weight:bold;color:#2E75B6;letter-spacing:0.2px">Auto Testing</div><div class="a" style="left:0.0px;top:106.0px;width:1333.0px;height:6.0px;background:#0070C0;"></div>
<div class="a" style="left:17.0px;top:125.0px;width:802.0px;height:96.0px;background:transparent;border:1px solid #000;"></div>
<div class="a" style="left:904.0px;top:125.0px;width:371.0px;height:96.0px;background:transparent;border:1px solid #000;"></div>
<div class="a" style="left:17.0px;top:247.0px;width:194.0px;height:366.0px;background:transparent;border:1px solid #000;"></div>
<div class="st" style="left:28.0px;top:143.0px;font-size:25px;color:#000;">1) Parameter legality check</div>
<div class="st" style="left:328.0px;top:143.0px;font-size:25px;color:#000;">1.1) <b>Number</b> of parameters</div>
<div class="st" style="left:328.0px;top:187.0px;font-size:25px;color:#000;">1.2) Determine whether it is a <b>prime number</b></div>
<div class="st" style="left:914.0px;top:143.0px;font-size:25px;color:#000;">2) <b>Generate data</b> by “gendata.sh”</div>
<div class="st" style="left:914.0px;top:188.0px;font-size:25px;color:#000;">3) <b>Compile</b> Source Code</div>
<div class="st" style="left:27.0px;top:276.0px;font-size:25px;color:#000;">4) Test</div>
<div class="st" style="left:40.0px;top:336.0px;font-size:25px;color:#000;">4.1) Write</div>
<div class="st" style="left:40.0px;top:396.0px;font-size:25px;color:#000;">4.2) Read</div>
<div class="st" style="left:40.0px;top:456.0px;font-size:25px;color:#000;">4.3) Repair</div>
<div class="st" style="left:40.0px;top:516.0px;font-size:25px;color:#000;">4.4) Diff</div>
<div class="st" style="left:27.0px;top:576.0px;font-size:25px;color:#000;">5) Calculate time</div>
<div class="st" style="left:349.0px;top:260.0px;font-size:25px;color:#000;">Compare</div>
<div class="st" style="left:350.0px;top:339.0px;font-size:25px;color:#000;">Disk 0</div>
<div class="st" style="left:350.0px;top:388.0px;font-size:25px;color:#000;">Disk 1</div>
<div class="st" style="left:350.0px;top:443.0px;font-size:25px;color:#000;">Disk 2</div>
<div class="st" style="left:350.0px;top:492.0px;font-size:25px;color:#000;">Disk 3</div>
<div class="st" style="left:350.0px;top:543.0px;font-size:25px;color:#000;">Disk 4</div>
<div class="st" style="left:350.0px;top:592.0px;font-size:25px;color:#000;">Disk 5</div>
<div class="st" style="left:350.0px;top:643.0px;font-size:25px;color:#000;">Disk 6</div>
<div class="st" style="left:341.0px;top:716.0px;font-size:25px;color:#000;">./test.sh &lt;M1&gt; &lt;M2&gt;</div>
<div class="st" style="left:744.0px;top:717.0px;font-size:25px;color:#000;">M1=7</div>
<div class="st" style="left:937.0px;top:717.0px;font-size:25px;color:#000;">M2=3</div>
<svg width="44" height="33" viewBox="0 0 44 33" style="left:458px;top:256px"><path d="M0,2 Q0,0 2,0 L13.2,0.3 L20.2,5.1 L37.5,5.1 Q39.4,5.3 39.4,7.7 L39.4,10 L10.6,10 Q8,10.3 7.2,13 L0.2,30 Z" fill="#000"/><path d="M9,14.1 Q9.8,12.5 11,12.5 L41.9,12.5 Q44.3,13 44,14.8 L35.6,32.7 L2.1,32.7 Z" fill="#000"/></svg>
<svg width="44" height="33" viewBox="0 0 44 33" style="left:458px;top:336px"><path d="M0,2 Q0,0 2,0 L13.2,0.3 L20.2,5.1 L37.5,5.1 Q39.4,5.3 39.4,7.7 L39.4,10 L10.6,10 Q8,10.3 7.2,13 L0.2,30 Z" fill="#000"/><path d="M9,14.1 Q9.8,12.5 11,12.5 L41.9,12.5 Q44.3,13 44,14.8 L35.6,32.7 L2.1,32.7 Z" fill="#000"/></svg>
<svg width="44" height="33" viewBox="0 0 44 33" style="left:458px;top:392.6px"><path d="M0,2 Q0,0 2,0 L13.2,0.3 L20.2,5.1 L37.5,5.1 Q39.4,5.3 39.4,7.7 L39.4,10 L10.6,10 Q8,10.3 7.2,13 L0.2,30 Z" fill="#000"/><path d="M9,14.1 Q9.8,12.5 11,12.5 L41.9,12.5 Q44.3,13 44,14.8 L35.6,32.7 L2.1,32.7 Z" fill="#000"/></svg>
<svg width="44" height="33" viewBox="0 0 44 33" style="left:458px;top:438.70000000000005px"><path d="M0,2 Q0,0 2,0 L13.2,0.3 L20.2,5.1 L37.5,5.1 Q39.4,5.3 39.4,7.7 L39.4,10 L10.6,10 Q8,10.3 7.2,13 L0.2,30 Z" fill="#000"/><path d="M9,14.1 Q9.8,12.5 11,12.5 L41.9,12.5 Q44.3,13 44,14.8 L35.6,32.7 L2.1,32.7 Z" fill="#000"/></svg>
<svg width="44" height="33" viewBox="0 0 44 33" style="left:458px;top:488.4px"><path d="M0,2 Q0,0 2,0 L13.2,0.3 L20.2,5.1 L37.5,5.1 Q39.4,5.3 39.4,7.7 L39.4,10 L10.6,10 Q8,10.3 7.2,13 L0.2,30 Z" fill="#000"/><path d="M9,14.1 Q9.8,12.5 11,12.5 L41.9,12.5 Q44.3,13 44,14.8 L35.6,32.7 L2.1,32.7 Z" fill="#000"/></svg>
<svg width="44" height="33" viewBox="0 0 44 33" style="left:458px;top:540.2px"><path d="M0,2 Q0,0 2,0 L13.2,0.3 L20.2,5.1 L37.5,5.1 Q39.4,5.3 39.4,7.7 L39.4,10 L10.6,10 Q8,10.3 7.2,13 L0.2,30 Z" fill="#000"/><path d="M9,14.1 Q9.8,12.5 11,12.5 L41.9,12.5 Q44.3,13 44,14.8 L35.6,32.7 L2.1,32.7 Z" fill="#000"/></svg>
<svg width="44" height="33" viewBox="0 0 44 33" style="left:458px;top:587.3px"><path d="M0,2 Q0,0 2,0 L13.2,0.3 L20.2,5.1 L37.5,5.1 Q39.4,5.3 39.4,7.7 L39.4,10 L10.6,10 Q8,10.3 7.2,13 L0.2,30 Z" fill="#000"/><path d="M9,14.1 Q9.8,12.5 11,12.5 L41.9,12.5 Q44.3,13 44,14.8 L35.6,32.7 L2.1,32.7 Z" fill="#000"/></svg>
<svg width="44" height="33" viewBox="0 0 44 33" style="left:458px;top:641px"><path d="M0,2 Q0,0 2,0 L13.2,0.3 L20.2,5.1 L37.5,5.1 Q39.4,5.3 39.4,7.7 L39.4,10 L10.6,10 Q8,10.3 7.2,13 L0.2,30 Z" fill="#000"/><path d="M9,14.1 Q9.8,12.5 11,12.5 L41.9,12.5 Q44.3,13 44,14.8 L35.6,32.7 L2.1,32.7 Z" fill="#000"/></svg>
<svg width="1333" height="750" style="left:0;top:0"><path d="M583,235.3 C569,235.8 556,237 556,241.5 L556,268 C556,271 544,272.5 529.5,272.5 C544,272.5 556,274 556,277 L556,308 C556,312 569,313.29999999999995 583,313.29999999999995" fill="none" stroke="#4472C4" stroke-width="1.3"/><path d="M583.5,332.5 C570,333 557,334 557,338.5 L557,492 C557,495 545,496.5 531.5,496.5 C545,496.5 557,498 557,501 L557,671 C557,675 570,676.2 583.5,676.2" fill="none" stroke="#4472C4" stroke-width="1.3"/></svg>
<div class="a" style="left:678.0px;top:234.0px;width:192.0px;height:41.0px;background:#A9D18E;border:1px solid #000;"></div><div class="cell" style="left:678.0px;top:241.5px;width:192.0px">Diff x</div>
<div class="a" style="left:869.0px;top:234.0px;width:192.0px;height:42.0px;background:#A9D18E;border:1px solid #000;"></div><div class="cell" style="left:869.0px;top:241.5px;width:192.0px">Diff x '</div>
<div class="a" style="left:678.0px;top:274.0px;width:192.0px;height:42.0px;background:#A9D18E;border:1px solid #000;"></div><div class="cell" style="left:678.0px;top:281.5px;width:192.0px">Diff y</div>
<div class="a" style="left:869.0px;top:274.0px;width:192.0px;height:42.0px;background:#A9D18E;border:1px solid #000;"></div><div class="cell" style="left:869.0px;top:281.5px;width:192.0px">Diff y '</div>
<div class="a" style="left:678.0px;top:328.0px;width:192.0px;height:41.0px;background:#4472C4;border:1px solid #2F528F;"></div><div class="cell" style="left:678.0px;top:335.5px;width:192.0px">Data0</div>
<div class="a" style="left:869.0px;top:328.0px;width:195.0px;height:41.0px;background:#4472C4;border:1px solid #2F528F;"></div><div class="cell" style="left:869.0px;top:335.5px;width:195.0px">Data0 '</div>
<div class="a" style="left:678.0px;top:383.0px;width:192.0px;height:41.0px;background:#4472C4;border:1px solid #2F528F;"></div><div class="cell" style="left:678.0px;top:390.5px;width:192.0px">Data1</div>
<div class="a" style="left:869.0px;top:383.0px;width:195.0px;height:41.0px;background:#4472C4;border:1px solid #2F528F;"></div><div class="cell" style="left:869.0px;top:390.5px;width:195.0px">Data1 '</div>
<div class="a" style="left:678.0px;top:438.0px;width:192.0px;height:41.0px;background:#4472C4;border:1px solid #2F528F;"></div><div class="cell" style="left:678.0px;top:445.5px;width:192.0px">Data2</div>
<div class="a" style="left:869.0px;top:438.0px;width:195.0px;height:41.0px;background:#4472C4;border:1px solid #2F528F;"></div><div class="cell" style="left:869.0px;top:445.5px;width:195.0px">Data2 '</div>
<div class="a" style="left:678.0px;top:486.0px;width:192.0px;height:41.0px;background:#4472C4;border:1px solid #2F528F;"></div><div class="cell" style="left:678.0px;top:493.5px;width:192.0px">Data3</div>
<div class="a" style="left:869.0px;top:486.0px;width:195.0px;height:41.0px;background:#FFC000;border:1px solid #2F528F;"></div><div class="cell" style="left:869.0px;top:493.5px;width:195.0px">Horizon '</div>
<div class="a" style="left:678.0px;top:534.0px;width:192.0px;height:41.0px;background:#4472C4;border:1px solid #2F528F;"></div><div class="cell" style="left:678.0px;top:541.5px;width:192.0px">Data4</div>
<div class="a" style="left:869.0px;top:534.0px;width:195.0px;height:41.0px;background:#FF0000;border:1px solid #2F528F;"></div><div class="cell" style="left:869.0px;top:541.5px;width:195.0px">Diagonal '</div>
<div class="a" style="left:678.0px;top:584.0px;width:194.0px;height:41.0px;background:#FFC000;border:1px solid #2F528F;"></div><div class="cell" style="left:678.0px;top:591.5px;width:194.0px">Horizon</div>
<div class="a" style="left:678.0px;top:634.0px;width:194.0px;height:41.0px;background:#FF0000;border:1px solid #2F528F;"></div><div class="cell" style="left:678.0px;top:641.5px;width:194.0px">Diagonal</div>
<svg width="38" height="40" viewBox="0 0 38 40" style="left:1088.5px;top:381.29999999999995px"><polygon points="9.9,0.5 18.8,11 27.7,0.5 37.4,9.2 26.4,20.1 37.4,31.1 27.7,39.5 18.8,28.8 9.9,39.5 0.3,31.1 11.1,20.1 0.3,9.2" fill="#FF0000" stroke="#2F528F" stroke-width="1"/></svg>
<svg width="38" height="40" viewBox="0 0 38 40" style="left:1089.8px;top:437px"><polygon points="9.9,0.5 18.8,11 27.7,0.5 37.4,9.2 26.4,20.1 37.4,31.1 27.7,39.5 18.8,28.8 9.9,39.5 0.3,31.1 11.1,20.1 0.3,9.2" fill="#FF0000" stroke="#2F528F" stroke-width="1"/></svg>
<svg width="38" height="40" viewBox="0 0 38 40" style="left:1090.5px;top:488px"><polygon points="9.9,0.5 18.8,11 27.7,0.5 37.4,9.2 26.4,20.1 37.4,31.1 27.7,39.5 18.8,28.8 9.9,39.5 0.3,31.1 11.1,20.1 0.3,9.2" fill="#FF0000" stroke="#2F528F" stroke-width="1"/></svg>
<svg width="38" height="40" viewBox="0 0 38 40" style="left:1090.5px;top:538px"><polygon points="9.9,0.5 18.8,11 27.7,0.5 37.4,9.2 26.4,20.1 37.4,31.1 27.7,39.5 18.8,28.8 9.9,39.5 0.3,31.1 11.1,20.1 0.3,9.2" fill="#FF0000" stroke="#2F528F" stroke-width="1"/></svg></div>
</body></html>
